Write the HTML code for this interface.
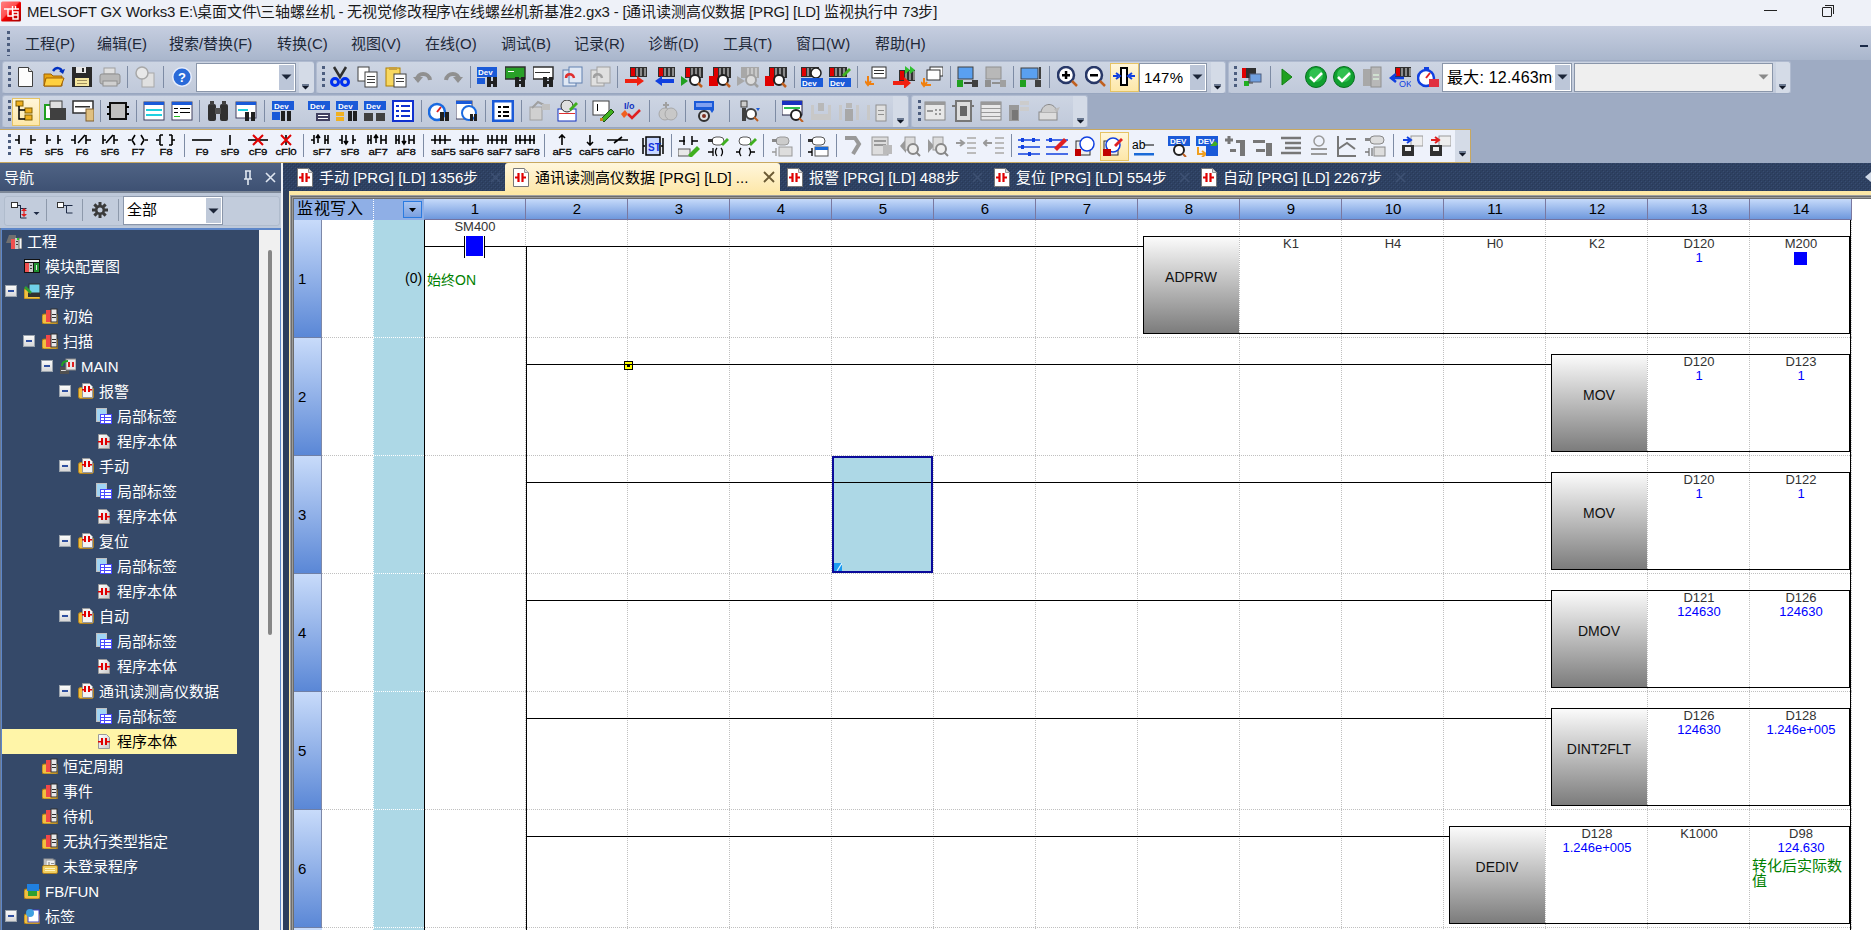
<!DOCTYPE html>
<html lang="zh-CN"><head><meta charset="utf-8"><title>GX Works3</title>
<style>
html,body{margin:0;padding:0;width:1871px;height:930px;overflow:hidden;background:#a4b1c8;font-family:"Liberation Sans", sans-serif;}
div{box-sizing:border-box;}
.ic{position:absolute;}
.sep{position:absolute;width:1px;background:#7d8ba4;}
.grip{position:absolute;width:3px;background-image:linear-gradient(#4c5d7e 3px,transparent 3px);background-size:3px 6px;}
.tr{position:absolute;color:#fff;font-size:15px;white-space:nowrap;line-height:20px;}
.exp{position:absolute;width:12px;height:12px;background:linear-gradient(#fafafa,#d8d8d8);border:1px solid #9aa3ad;}
.exp:after{content:"";position:absolute;left:2px;top:4px;width:6px;height:2px;background:#3050a0;}
.op{position:absolute;width:102px;text-align:center;font-size:13px;line-height:14px;color:#333;white-space:nowrap;}
.val{position:absolute;width:102px;text-align:center;font-size:13px;line-height:14px;color:#0000ff;white-space:nowrap;}
.vd{position:absolute;width:1px;background-image:linear-gradient(#c0c0c0 50%,transparent 50%);background-size:1px 2px;}
.hd{position:absolute;height:1px;background-image:linear-gradient(90deg,#c0c0c0 50%,transparent 50%);background-size:2px 1px;}
.blk{position:absolute;background:#000;}
</style></head><body>

<div style="position:absolute;left:0px;top:0px;width:1871px;height:26px;background:#eef1f8"></div>
<svg class="ic" style="left:1px;top:1px" width="21" height="21"><defs><linearGradient id="tg" x1="0" y1="0" x2="1" y2="1"><stop offset="0" stop-color="#ff8080"/><stop offset="0.45" stop-color="#ff5050"/><stop offset="0.5" stop-color="#f00000"/><stop offset="1" stop-color="#a00000"/></linearGradient></defs><rect x="0" y="0.5" width="20" height="20" rx="1.5" fill="url(#tg)"/><path d="M3 8h15M7 8v7h5M11.5 5v10M14.5 5v3M12 11h5v7h-5zM12 14h5" fill="none" stroke="#fff" stroke-width="1.4"/></svg>
<div style="position:absolute;left:27px;top:2px;white-space:nowrap;font-size:15px;color:#1a1a1a;line-height:20px;letter-spacing:-0.17px">MELSOFT GX Works3 E:\桌面文件\三轴螺丝机 - 无视觉修改程序\在线螺丝机新基准2.gx3 - [通讯读测高仪数据 [PRG] [LD] 监视执行中 73步]</div>
<div style="position:absolute;left:1764px;top:10px;width:13px;height:1px;background:#222"></div>
<div style="position:absolute;left:1822px;top:7px;width:10px;height:10px;border:1px solid #222;border-radius:1px"></div>
<div style="position:absolute;left:1825px;top:5px;width:9px;height:9px;border-top:1px solid #222;border-right:1px solid #222"></div>
<div style="position:absolute;left:0px;top:26px;width:1871px;height:34px;background:linear-gradient(#c6cee0,#a9b6cc)"></div>
<div class="grip" style="left:7px;top:31px;height:25px"></div>
<div style="position:absolute;left:25px;top:34px;white-space:nowrap;font-size:15px;color:#1e2838;line-height:20px">工程(P)</div>
<div style="position:absolute;left:97px;top:34px;white-space:nowrap;font-size:15px;color:#1e2838;line-height:20px">编辑(E)</div>
<div style="position:absolute;left:169px;top:34px;white-space:nowrap;font-size:15px;color:#1e2838;line-height:20px">搜索/替换(F)</div>
<div style="position:absolute;left:277px;top:34px;white-space:nowrap;font-size:15px;color:#1e2838;line-height:20px">转换(C)</div>
<div style="position:absolute;left:351px;top:34px;white-space:nowrap;font-size:15px;color:#1e2838;line-height:20px">视图(V)</div>
<div style="position:absolute;left:425px;top:34px;white-space:nowrap;font-size:15px;color:#1e2838;line-height:20px">在线(O)</div>
<div style="position:absolute;left:501px;top:34px;white-space:nowrap;font-size:15px;color:#1e2838;line-height:20px">调试(B)</div>
<div style="position:absolute;left:574px;top:34px;white-space:nowrap;font-size:15px;color:#1e2838;line-height:20px">记录(R)</div>
<div style="position:absolute;left:648px;top:34px;white-space:nowrap;font-size:15px;color:#1e2838;line-height:20px">诊断(D)</div>
<div style="position:absolute;left:723px;top:34px;white-space:nowrap;font-size:15px;color:#1e2838;line-height:20px">工具(T)</div>
<div style="position:absolute;left:796px;top:34px;white-space:nowrap;font-size:15px;color:#1e2838;line-height:20px">窗口(W)</div>
<div style="position:absolute;left:875px;top:34px;white-space:nowrap;font-size:15px;color:#1e2838;line-height:20px">帮助(H)</div>
<div style="position:absolute;left:1860px;top:45px;width:8px;height:2px;background:#1a2a48"></div>
<div style="position:absolute;left:0px;top:60px;width:1871px;height:103px;background:#9eabc3"></div>
<div style="position:absolute;left:2px;top:61px;width:312px;height:33px;background:linear-gradient(#cdd5e3,#c0c9da);border:1px solid #b0bbd0;border-bottom-color:#98a6bf;border-radius:3px"></div>
<div style="position:absolute;left:316px;top:61px;width:910px;height:33px;background:linear-gradient(#cdd5e3,#c0c9da);border:1px solid #b0bbd0;border-bottom-color:#98a6bf;border-radius:3px"></div>
<div style="position:absolute;left:1228px;top:61px;width:563px;height:33px;background:linear-gradient(#cdd5e3,#c0c9da);border:1px solid #b0bbd0;border-bottom-color:#98a6bf;border-radius:3px"></div>
<div class="grip" style="left:8px;top:66px;height:22px"></div>
<div class="grip" style="left:322px;top:66px;height:22px"></div>
<div class="grip" style="left:1234px;top:66px;height:22px"></div>
<div style="position:absolute;left:299px;top:62px;width:15px;height:31px;background:#d4dbe7;border-radius:0 3px 3px 0"></div>
<div style="position:absolute;left:1211px;top:62px;width:14px;height:31px;background:#d4dbe7;border-radius:0 3px 3px 0"></div>
<div style="position:absolute;left:1776px;top:62px;width:14px;height:31px;background:#d4dbe7;border-radius:0 3px 3px 0"></div>
<svg class="ic" style="left:15px;top:66px" width="22" height="22" viewBox="0 0 22 22"><path d="M3.5 1.5h10l4 4v15h-14z" fill="#fdfdfd" stroke="#404040" stroke-width="1"/><path d="M13.5 1.5v4h4" fill="#ddd" stroke="#404040" stroke-width="1"/></svg>
<svg class="ic" style="left:43px;top:66px" width="22" height="22" viewBox="0 0 22 22"><path d="M1 8h7l2 2h9v10H1z" fill="#e8a410" stroke="#a06000" stroke-width="1"/><path d="M3 12h18l-3 8H1z" fill="#ffd040" stroke="#a06000" stroke-width="1"/><path d="M10 5c3-4 8-4 9 1" fill="none" stroke="#0030c0" stroke-width="2.5"/><path d="M16 5l4 3 2-5z" fill="#0030c0"/></svg>
<svg class="ic" style="left:71px;top:66px" width="22" height="22" viewBox="0 0 22 22"><rect x="1" y="1" width="20" height="20" fill="#2a2a2a"/><rect x="5" y="1" width="10" height="6" fill="#e8e8e8"/><rect x="11" y="2" width="2" height="4" fill="#2a2a2a"/><rect x="4" y="12" width="14" height="8" fill="#f4e6a0"/><rect x="6" y="14" width="10" height="1" fill="#a09060"/><rect x="6" y="17" width="10" height="1" fill="#a09060"/></svg>
<svg class="ic" style="left:99px;top:66px" width="22" height="22" viewBox="0 0 22 22"><rect x="5" y="2" width="11" height="6" fill="#e0e0e0" stroke="#a0a0a0" stroke-width="1"/><rect x="1" y="8" width="20" height="10" fill="#b8b8b8" stroke="#909090" stroke-width="1" rx="2"/><rect x="4" y="15" width="14" height="5" fill="#d0d0d0" stroke="#909090" stroke-width="1"/></svg>
<div class="sep" style="left:127px;top:66px;height:22px"></div>
<svg class="ic" style="left:135px;top:66px" width="22" height="22" viewBox="0 0 22 22"><rect x="7" y="7" width="12" height="14" fill="#e0e0e0" stroke="#a8a8a8" stroke-width="1"/><circle cx="7" cy="7" r="6" fill="#e8e8e8" stroke="#a8a8a8" stroke-width="1.5"/></svg>
<div class="sep" style="left:163px;top:66px;height:22px"></div>
<svg class="ic" style="left:171px;top:66px" width="22" height="22" viewBox="0 0 22 22"><circle cx="11" cy="11" r="10" fill="#e8eefc"/><circle cx="11" cy="11" r="8.5" fill="#2a6ad8"/><text x="7" y="16" font-family="Liberation Sans" font-size="13" font-weight="bold" fill="#fff">?</text></svg>
<svg class="ic" style="left:329px;top:66px" width="22" height="22" viewBox="0 0 22 22"><path d="M5 1l6 10 6-10" fill="none" stroke="#303030" stroke-width="2.5"/><circle cx="6" cy="16" r="3.5" fill="none" stroke="#0030f0" stroke-width="3"/><circle cx="16" cy="16" r="3.5" fill="none" stroke="#0030f0" stroke-width="3"/></svg>
<svg class="ic" style="left:357px;top:66px" width="22" height="22" viewBox="0 0 22 22"><rect x="1" y="1" width="11" height="14" fill="#fff" stroke="#404040" stroke-width="1"/><rect x="8" y="6" width="12" height="15" fill="#fff" stroke="#404040" stroke-width="1"/><rect x="10" y="10" width="8" height="1" fill="#404040"/><rect x="10" y="13" width="8" height="1" fill="#404040"/><rect x="10" y="16" width="8" height="1" fill="#404040"/></svg>
<svg class="ic" style="left:385px;top:66px" width="22" height="22" viewBox="0 0 22 22"><rect x="1" y="2" width="14" height="18" fill="#f8d860" stroke="#b08000" stroke-width="1"/><rect x="4" y="1" width="8" height="3" fill="#c8a040"/><rect x="9" y="8" width="12" height="13" fill="#fff" stroke="#404040" stroke-width="1"/><rect x="11" y="12" width="8" height="1" fill="#404040"/><rect x="11" y="15" width="8" height="1" fill="#404040"/></svg>
<svg class="ic" style="left:413px;top:66px" width="22" height="22" viewBox="0 0 22 22"><path d="M4 14c0-8 12-8 13 0" fill="none" stroke="#909090" stroke-width="4"/><path d="M0 11l5 6 5-6z" fill="#909090"/></svg>
<svg class="ic" style="left:441px;top:66px" width="22" height="22" viewBox="0 0 22 22"><path d="M18 14c0-8-12-8-13 0" fill="none" stroke="#909090" stroke-width="4"/><path d="M22 11l-5 6-5-6z" fill="#909090"/></svg>
<div class="sep" style="left:470px;top:66px;height:22px"></div>
<svg class="ic" style="left:477px;top:66px" width="22" height="22" viewBox="0 0 22 22"><rect x="0" y="1" width="20" height="10" fill="#1a5ad8"/><text x="1" y="9" font-family="Liberation Sans" font-size="8" font-weight="bold" fill="#fff">Dev</text><rect x="0" y="12" width="8" height="6" fill="#1a5ad8"/><rect x="10" y="11" width="4" height="10" fill="#202020"/><rect x="16" y="11" width="4" height="10" fill="#202020"/><rect x="12" y="15" width="6" height="3" fill="#202020"/></svg>
<svg class="ic" style="left:505px;top:66px" width="22" height="22" viewBox="0 0 22 22"><rect x="0" y="1" width="20" height="12" fill="#28a028" stroke="#303030" stroke-width="1.5"/><rect x="3" y="5" width="6" height="1" fill="#fff"/><rect x="10" y="11" width="4" height="10" fill="#202020"/><rect x="16" y="11" width="4" height="10" fill="#202020"/><rect x="12" y="15" width="6" height="3" fill="#202020"/></svg>
<svg class="ic" style="left:533px;top:66px" width="22" height="22" viewBox="0 0 22 22"><rect x="0" y="1" width="20" height="12" fill="#fff" stroke="#303030" stroke-width="1.5"/><rect x="2" y="6" width="15" height="1" fill="#303030"/><rect x="10" y="11" width="4" height="10" fill="#202020"/><rect x="16" y="11" width="4" height="10" fill="#202020"/><rect x="12" y="15" width="6" height="3" fill="#202020"/></svg>
<svg class="ic" style="left:561px;top:66px" width="22" height="22" viewBox="0 0 22 22"><rect x="2" y="4" width="13" height="16" fill="#e0e8f4" stroke="#6080b0" stroke-width="1"/><rect x="8" y="1" width="13" height="16" fill="#e0e8f4" stroke="#6080b0" stroke-width="1"/><path d="M5 12c0-5 7-5 8 0" fill="none" stroke="#e03030" stroke-width="2.5"/></svg>
<svg class="ic" style="left:589px;top:66px" width="22" height="22" viewBox="0 0 22 22"><rect x="2" y="4" width="13" height="16" fill="#e0e0e0" stroke="#a0a0a0" stroke-width="1"/><rect x="8" y="1" width="13" height="16" fill="#e0e0e0" stroke="#a0a0a0" stroke-width="1"/><path d="M5 12c0-5 7-5 8 0" fill="none" stroke="#a0a0a0" stroke-width="2.5"/></svg>
<div class="sep" style="left:617px;top:66px;height:22px"></div>
<svg class="ic" style="left:625px;top:66px" width="22" height="22" viewBox="0 0 22 22"><rect x="5" y="1" width="17" height="10" fill="#303030"/><rect x="6" y="2" width="4" height="8" fill="#e00000"/><rect x="11" y="2" width="2" height="8" fill="#8a8a8a"/><rect x="15" y="2" width="2" height="8" fill="#8a8a8a"/><rect x="19" y="2" width="2" height="8" fill="#8a8a8a"/><rect x="0" y="13" width="13" height="4" fill="#f02010"/><path d="M12 10l7 5-7 5z" fill="#f02010"/></svg>
<svg class="ic" style="left:653px;top:66px" width="22" height="22" viewBox="0 0 22 22"><rect x="5" y="1" width="17" height="10" fill="#303030"/><rect x="6" y="2" width="4" height="8" fill="#e00000"/><rect x="11" y="2" width="2" height="8" fill="#8a8a8a"/><rect x="15" y="2" width="2" height="8" fill="#8a8a8a"/><rect x="19" y="2" width="2" height="8" fill="#8a8a8a"/><rect x="8" y="13" width="13" height="4" fill="#1040e0"/><path d="M9 10l-7 5 7 5z" fill="#1040e0"/></svg>
<svg class="ic" style="left:681px;top:66px" width="22" height="22" viewBox="0 0 22 22"><rect x="4" y="1" width="18" height="11" fill="#303030"/><rect x="5" y="2" width="4" height="9" fill="#e00000"/><rect x="10" y="2" width="2" height="9" fill="#8a8a8a"/><rect x="14" y="2" width="2" height="9" fill="#8a8a8a"/><rect x="18" y="2" width="2" height="9" fill="#8a8a8a"/><path d="M0 10l7 5-7 5z" fill="#20a020"/><circle cx="14" cy="14" r="5" fill="#fff" stroke="#202020" stroke-width="2"/><path d="M17 17l4 4" fill="none" stroke="#c06020" stroke-width="2.5"/></svg>
<svg class="ic" style="left:709px;top:66px" width="22" height="22" viewBox="0 0 22 22"><rect x="4" y="1" width="18" height="11" fill="#303030"/><rect x="5" y="2" width="4" height="9" fill="#e00000"/><rect x="10" y="2" width="2" height="9" fill="#8a8a8a"/><rect x="14" y="2" width="2" height="9" fill="#8a8a8a"/><rect x="18" y="2" width="2" height="9" fill="#8a8a8a"/><rect x="0" y="10" width="9" height="10" fill="#e00000"/><circle cx="14" cy="14" r="5" fill="#fff" stroke="#202020" stroke-width="2"/><path d="M17 17l4 4" fill="none" stroke="#c06020" stroke-width="2.5"/></svg>
<svg class="ic" style="left:737px;top:66px" width="22" height="22" viewBox="0 0 22 22"><rect x="4" y="1" width="18" height="11" fill="#a8a8a8"/><rect x="10" y="2" width="2" height="9" fill="#c8c8c8"/><rect x="14" y="2" width="2" height="9" fill="#c8c8c8"/><rect x="18" y="2" width="2" height="9" fill="#c8c8c8"/><path d="M0 10l8 5-8 5z" fill="#a8a8a8"/><circle cx="14" cy="14" r="5" fill="#ddd" stroke="#a0a0a0" stroke-width="2"/><path d="M17 17l4 4" fill="none" stroke="#a0a0a0" stroke-width="2.5"/></svg>
<svg class="ic" style="left:765px;top:66px" width="22" height="22" viewBox="0 0 22 22"><rect x="4" y="1" width="18" height="11" fill="#303030"/><rect x="5" y="2" width="4" height="9" fill="#e00000"/><rect x="10" y="2" width="2" height="9" fill="#8a8a8a"/><rect x="14" y="2" width="2" height="9" fill="#8a8a8a"/><rect x="18" y="2" width="2" height="9" fill="#8a8a8a"/><rect x="0" y="10" width="9" height="10" fill="#e00000"/><circle cx="14" cy="14" r="5" fill="#fff" stroke="#202020" stroke-width="2"/><path d="M17 17l4 4" fill="none" stroke="#c06020" stroke-width="2.5"/></svg>
<div class="sep" style="left:794px;top:66px;height:22px"></div>
<svg class="ic" style="left:801px;top:66px" width="22" height="22" viewBox="0 0 22 22"><rect x="0" y="1" width="18" height="10" fill="#303030"/><rect x="1" y="2" width="4" height="8" fill="#e00000"/><rect x="6" y="2" width="2" height="8" fill="#8a8a8a"/><rect x="10" y="2" width="2" height="8" fill="#8a8a8a"/><rect x="14" y="2" width="2" height="8" fill="#8a8a8a"/><circle cx="15" cy="7" r="5" fill="#fff" stroke="#202020" stroke-width="1.5"/><rect x="0" y="12" width="22" height="9" fill="#1a5ad8"/><text x="1" y="20" font-family="Liberation Sans" font-size="8" font-weight="bold" fill="#fff">Dev</text></svg>
<svg class="ic" style="left:829px;top:66px" width="22" height="22" viewBox="0 0 22 22"><rect x="0" y="1" width="18" height="10" fill="#303030"/><rect x="1" y="2" width="4" height="8" fill="#e00000"/><rect x="6" y="2" width="2" height="8" fill="#8a8a8a"/><rect x="10" y="2" width="2" height="8" fill="#8a8a8a"/><rect x="14" y="2" width="2" height="8" fill="#8a8a8a"/><path d="M13 9l7-7 2 2-7 7z" fill="#40b020"/><rect x="0" y="12" width="22" height="9" fill="#1a5ad8"/><text x="1" y="20" font-family="Liberation Sans" font-size="8" font-weight="bold" fill="#fff">Dev</text></svg>
<div class="sep" style="left:857px;top:66px;height:22px"></div>
<svg class="ic" style="left:865px;top:66px" width="22" height="22" viewBox="0 0 22 22"><rect x="7" y="1" width="14" height="11" fill="#fff" stroke="#303030" stroke-width="1"/><rect x="9" y="4" width="10" height="1" fill="#303030"/><rect x="9" y="7" width="10" height="1" fill="#303030"/><path d="M3 10v8M0 15l3 4 3-4M3 18h6" fill="none" stroke="#f08010" stroke-width="2"/></svg>
<svg class="ic" style="left:893px;top:66px" width="22" height="22" viewBox="0 0 22 22"><rect x="6" y="4" width="16" height="11" fill="#303030"/><rect x="7" y="5" width="4" height="9" fill="#e00000"/><rect x="12" y="5" width="2" height="9" fill="#8a8a8a"/><rect x="16" y="5" width="2" height="9" fill="#8a8a8a"/><rect x="20" y="5" width="2" height="9" fill="#8a8a8a"/><path d="M12 0l5 4-5 4zM17 0l5 4-5 4z" fill="#30c030"/><rect x="0" y="15" width="12" height="4" fill="#f02010"/><path d="M11 11l7 6-7 6z" fill="#f02010"/></svg>
<svg class="ic" style="left:921px;top:66px" width="22" height="22" viewBox="0 0 22 22"><rect x="9" y="1" width="13" height="9" fill="#fff" stroke="#303030" stroke-width="1"/><rect x="6" y="4" width="13" height="10" fill="#fff" stroke="#303030" stroke-width="1"/><path d="M3 12v7M0 16l3 4 3-4M3 19h7" fill="none" stroke="#f08010" stroke-width="2"/></svg>
<div class="sep" style="left:950px;top:66px;height:22px"></div>
<svg class="ic" style="left:957px;top:66px" width="22" height="22" viewBox="0 0 22 22"><rect x="1" y="1" width="15" height="12" fill="#5aa0f0" stroke="#404040" stroke-width="1"/><rect x="0" y="14" width="6" height="7" fill="#20a020"/><rect x="15" y="14" width="6" height="7" fill="#404040"/><rect x="7" y="16" width="8" height="2" fill="#404040"/></svg>
<svg class="ic" style="left:985px;top:66px" width="22" height="22" viewBox="0 0 22 22"><rect x="1" y="1" width="15" height="12" fill="#b8b8b8" stroke="#909090" stroke-width="1"/><rect x="0" y="14" width="6" height="7" fill="#909090"/><rect x="15" y="14" width="6" height="7" fill="#a0a0a0"/><rect x="7" y="16" width="8" height="2" fill="#909090"/></svg>
<div class="sep" style="left:1013px;top:66px;height:22px"></div>
<svg class="ic" style="left:1020px;top:66px" width="22" height="22" viewBox="0 0 22 22"><rect x="1" y="2" width="17" height="11" fill="#5aa0f0" stroke="#404040" stroke-width="1"/><rect x="19" y="1" width="2" height="12" fill="#404040"/><rect x="0" y="14" width="6" height="7" fill="#20a020"/><rect x="15" y="14" width="6" height="7" fill="#404040"/></svg>
<div class="sep" style="left:1049px;top:66px;height:22px"></div>
<svg class="ic" style="left:1057px;top:66px" width="22" height="22" viewBox="0 0 22 22"><circle cx="9" cy="9" r="8" fill="#fff" stroke="#283868" stroke-width="2.5"/><rect x="5" y="8" width="8" height="2.5" fill="#000"/><rect x="7.8" y="5" width="2.5" height="8" fill="#000"/><path d="M15 15l5 5" fill="none" stroke="#c06020" stroke-width="2.5"/></svg>
<svg class="ic" style="left:1085px;top:66px" width="22" height="22" viewBox="0 0 22 22"><circle cx="9" cy="9" r="8" fill="#fff" stroke="#283868" stroke-width="2.5"/><rect x="5" y="8" width="8" height="2.5" fill="#000"/><path d="M15 15l5 5" fill="none" stroke="#c06020" stroke-width="2.5"/></svg>
<svg class="ic" style="left:1241px;top:66px" width="22" height="22" viewBox="0 0 22 22"><rect x="1" y="2" width="14" height="10" fill="#303030"/><rect x="1" y="2" width="4" height="10" fill="#e00000"/><rect x="9" y="8" width="11" height="8" fill="#70a0e0" stroke="#506080" stroke-width="1"/><rect x="3" y="15" width="5" height="5" fill="#20b020"/><path d="M8 12v5h4" fill="none" stroke="#404040" stroke-width="1"/></svg>
<div class="sep" style="left:1270px;top:66px;height:22px"></div>
<svg class="ic" style="left:1276px;top:66px" width="22" height="22" viewBox="0 0 22 22"><path d="M6 3l10 8-10 8z" fill="#20a020" stroke="#108010" stroke-width="1"/></svg>
<svg class="ic" style="left:1305px;top:66px" width="22" height="22" viewBox="0 0 22 22"><circle cx="11" cy="11" r="10.5" fill="#10a030" stroke="#087020" stroke-width="1"/><circle cx="11" cy="9" r="7" fill="#30c050"/><path d="M5 11l4 4 8-8" fill="none" stroke="#fff" stroke-width="2.5"/></svg>
<svg class="ic" style="left:1333px;top:66px" width="22" height="22" viewBox="0 0 22 22"><circle cx="11" cy="11" r="10.5" fill="#10a030" stroke="#087020" stroke-width="1"/><circle cx="11" cy="9" r="7" fill="#30c050"/><path d="M5 11l4 4 8-8" fill="none" stroke="#fff" stroke-width="2.5"/></svg>
<svg class="ic" style="left:1361px;top:66px" width="22" height="22" viewBox="0 0 22 22"><rect x="2" y="3" width="8" height="17" fill="#a8a8a8"/><rect x="10" y="1" width="10" height="20" fill="#b8b8b8" stroke="#909090" stroke-width="1"/><rect x="12" y="8" width="6" height="2" fill="#d0e0d0"/><rect x="12" y="12" width="6" height="2" fill="#d0e0d0"/></svg>
<svg class="ic" style="left:1389px;top:66px" width="22" height="22" viewBox="0 0 22 22"><rect x="6" y="1" width="16" height="10" fill="#303030"/><rect x="7" y="2" width="4" height="8" fill="#e00000"/><rect x="12" y="2" width="2" height="8" fill="#8a8a8a"/><rect x="16" y="2" width="2" height="8" fill="#8a8a8a"/><rect x="20" y="2" width="2" height="8" fill="#8a8a8a"/><path d="M3 12h12M7 8l-5 4 5 4" fill="none" stroke="#1040e0" stroke-width="2.5"/><text x="10" y="21" font-family="Liberation Sans" font-size="9" font-weight="normal" fill="#1040e0">OK</text></svg>
<svg class="ic" style="left:1417px;top:66px" width="22" height="22" viewBox="0 0 22 22"><circle cx="9" cy="12" r="8" fill="#fff" stroke="#1040e0" stroke-width="2.5"/><rect x="7" y="1" width="5" height="3" fill="#1040e0"/><path d="M9 12l4-5" fill="none" stroke="#e02020" stroke-width="2"/><rect x="12" y="13" width="10" height="8" fill="#e03040"/></svg>
<div style="position:absolute;left:1110px;top:63px;width:29px;height:29px;background:linear-gradient(#fff6da,#fde7a8);border:1px solid #e5c365"></div>
<svg class="ic" style="left:1113px;top:66px" width="22" height="22" viewBox="0 0 22 22"><rect x="8" y="2" width="6" height="17" fill="#fff" stroke="#000" stroke-width="2"/><path d="M0 10h5M3 7l4 3-4 3" fill="none" stroke="#1040e0" stroke-width="2"/><path d="M22 10h-5M19 7l-4 3 4 3" fill="none" stroke="#1040e0" stroke-width="2"/></svg>
<svg class="ic" style="left:295px;top:68px" width="22" height="22" viewBox="0 0 22 22"><rect x="7" y="16" width="7" height="2" fill="#6a7890"/><path d="M7 18h7l-3.5 3.5z" fill="#101828"/></svg>
<svg class="ic" style="left:1207px;top:68px" width="22" height="22" viewBox="0 0 22 22"><rect x="7" y="16" width="7" height="2" fill="#6a7890"/><path d="M7 18h7l-3.5 3.5z" fill="#101828"/></svg>
<svg class="ic" style="left:1772px;top:68px" width="22" height="22" viewBox="0 0 22 22"><rect x="7" y="16" width="7" height="2" fill="#6a7890"/><path d="M7 18h7l-3.5 3.5z" fill="#101828"/></svg>
<div style="position:absolute;left:196px;top:63px;width:100px;height:29px;background:#fff;border:1px solid #8a96aa"></div>
<div style="position:absolute;left:279px;top:65px;width:15px;height:25px;background:#bcc6d8"></div>
<svg class="ic" style="left:281px;top:74px" width="11" height="6"><path d="M0.5 0.5h10l-5 5z" fill="#1b2538"/></svg>
<div style="position:absolute;left:1139px;top:63px;width:68px;height:29px;background:#fff;border:1px solid #8a96aa"></div>
<div style="position:absolute;left:1144px;top:68px;white-space:nowrap;font-size:15px;color:#000;line-height:20px;overflow:hidden;width:44px;letter-spacing:0.2px">147%</div>
<div style="position:absolute;left:1190px;top:65px;width:15px;height:25px;background:#bcc6d8"></div>
<svg class="ic" style="left:1192px;top:74px" width="11" height="6"><path d="M0.5 0.5h10l-5 5z" fill="#1b2538"/></svg>
<div style="position:absolute;left:1442px;top:63px;width:130px;height:29px;background:#fff;border:1px solid #8a96aa"></div>
<div style="position:absolute;left:1447px;top:68px;white-space:nowrap;font-size:16px;color:#000;line-height:20px;overflow:hidden;width:106px;letter-spacing:0.2px">最大: 12.463ms</div>
<div style="position:absolute;left:1555px;top:65px;width:15px;height:25px;background:#bcc6d8"></div>
<svg class="ic" style="left:1557px;top:74px" width="11" height="6"><path d="M0.5 0.5h10l-5 5z" fill="#1b2538"/></svg>
<div style="position:absolute;left:1574px;top:63px;width:199px;height:29px;background:#efefef;border:1px solid #8a96aa"></div>
<div style="position:absolute;left:1756px;top:65px;width:15px;height:25px;background:#efefef"></div>
<svg class="ic" style="left:1758px;top:74px" width="11" height="6"><path d="M0.5 0.5h10l-5 5z" fill="#8a8a8a"/></svg>
<div style="position:absolute;left:2px;top:95px;width:907px;height:33px;background:linear-gradient(#cdd5e3,#c0c9da);border:1px solid #b0bbd0;border-bottom-color:#98a6bf;border-radius:3px"></div>
<div style="position:absolute;left:911px;top:95px;width:177px;height:33px;background:linear-gradient(#cdd5e3,#c0c9da);border:1px solid #b0bbd0;border-bottom-color:#98a6bf;border-radius:3px"></div>
<div style="position:absolute;left:893px;top:96px;width:15px;height:31px;background:#d4dbe7;border-radius:0 3px 3px 0"></div>
<div style="position:absolute;left:1073px;top:96px;width:14px;height:31px;background:#d4dbe7;border-radius:0 3px 3px 0"></div>
<div class="grip" style="left:8px;top:100px;height:22px"></div>
<div class="grip" style="left:918px;top:100px;height:22px"></div>
<div style="position:absolute;left:12px;top:98px;width:28px;height:28px;background:linear-gradient(#fff6da,#fde7a8);border:1px solid #e5c365"></div>
<svg class="ic" style="left:15px;top:100px" width="22" height="22" viewBox="0 0 22 22"><rect x="1" y="1" width="7" height="5" fill="#f0b020" stroke="#806000" stroke-width="1"/><rect x="10" y="8" width="7" height="5" fill="#f0b020" stroke="#806000" stroke-width="1"/><rect x="10" y="15" width="7" height="5" fill="#f0b020" stroke="#806000" stroke-width="1"/><path d="M4 6v13h6M4 10h6" fill="none" stroke="#000" stroke-width="1.5"/></svg>
<svg class="ic" style="left:44px;top:100px" width="22" height="22" viewBox="0 0 22 22"><rect x="1" y="5" width="12" height="14" fill="#fff" stroke="#20a020" stroke-width="2"/><rect x="6" y="1" width="12" height="8" fill="#e0e0e0" stroke="#404040" stroke-width="1"/><rect x="6" y="8" width="16" height="12" fill="#404040"/></svg>
<svg class="ic" style="left:72px;top:100px" width="22" height="22" viewBox="0 0 22 22"><rect x="1" y="1" width="20" height="12" fill="#fff" stroke="#303030" stroke-width="1.5"/><rect x="3" y="6" width="15" height="1.5" fill="#303030"/><rect x="14" y="9" width="8" height="12" fill="#e0c080" stroke="#806030" stroke-width="1"/></svg>
<div class="sep" style="left:100px;top:100px;height:22px"></div>
<svg class="ic" style="left:107px;top:100px" width="22" height="22" viewBox="0 0 22 22"><rect x="3" y="3" width="16" height="16" fill="#c0c0c0" stroke="#101010" stroke-width="2"/><rect x="0" y="6" width="3" height="2" fill="#000"/><rect x="0" y="13" width="3" height="2" fill="#000"/><rect x="19" y="6" width="3" height="2" fill="#000"/><rect x="19" y="13" width="3" height="2" fill="#000"/></svg>
<div class="sep" style="left:136px;top:100px;height:22px"></div>
<svg class="ic" style="left:143px;top:100px" width="22" height="22" viewBox="0 0 22 22"><rect x="1" y="2" width="20" height="18" fill="#fff" stroke="#404060" stroke-width="1"/><rect x="1" y="2" width="20" height="3" fill="#1a5ad8"/><rect x="3" y="9" width="16" height="2" fill="#20d0e0"/><rect x="3" y="14" width="16" height="2" fill="#20d0e0"/></svg>
<svg class="ic" style="left:171px;top:100px" width="22" height="22" viewBox="0 0 22 22"><rect x="1" y="2" width="20" height="18" fill="#fff" stroke="#404060" stroke-width="1"/><rect x="1" y="2" width="20" height="3" fill="#1a5ad8"/><rect x="3" y="8" width="4" height="1" fill="#000"/><rect x="9" y="8" width="10" height="1" fill="#000"/><rect x="3" y="12" width="4" height="1" fill="#000"/><rect x="9" y="12" width="10" height="1" fill="#000"/><rect x="3" y="16" width="6" height="1" fill="#20c020"/></svg>
<div class="sep" style="left:199px;top:100px;height:22px"></div>
<svg class="ic" style="left:207px;top:100px" width="22" height="22" viewBox="0 0 22 22"><rect x="1" y="4" width="8" height="17" fill="#303030" rx="2"/><rect x="13" y="4" width="8" height="17" fill="#303030" rx="2"/><rect x="8" y="8" width="6" height="6" fill="#505050"/><rect x="3" y="1" width="4" height="4" fill="#404040"/><rect x="15" y="1" width="4" height="4" fill="#404040"/></svg>
<svg class="ic" style="left:235px;top:100px" width="22" height="22" viewBox="0 0 22 22"><rect x="1" y="2" width="20" height="16" fill="#fff" stroke="#404060" stroke-width="1"/><rect x="1" y="2" width="20" height="3" fill="#1a5ad8"/><rect x="3" y="9" width="10" height="2" fill="#20d0e0"/><rect x="10" y="12" width="4" height="9" fill="#202020"/><rect x="16" y="12" width="4" height="9" fill="#202020"/></svg>
<div class="sep" style="left:264px;top:100px;height:22px"></div>
<svg class="ic" style="left:272px;top:100px" width="22" height="22" viewBox="0 0 22 22"><rect x="0" y="1" width="22" height="9" fill="#1a5ad8"/><text x="2" y="9" font-family="Liberation Sans" font-size="8" font-weight="bold" fill="#fff">Dev</text><rect x="0" y="12" width="8" height="8" fill="#1a5ad8"/><rect x="9" y="11" width="4" height="10" fill="#202020"/><rect x="15" y="11" width="4" height="10" fill="#202020"/></svg>
<svg class="ic" style="left:308px;top:100px" width="22" height="22" viewBox="0 0 22 22"><rect x="0" y="1" width="22" height="9" fill="#1a5ad8"/><text x="2" y="9" font-family="Liberation Sans" font-size="8" font-weight="bold" fill="#fff">Dev</text><rect x="8" y="13" width="14" height="8" fill="#404060"/><rect x="10" y="15" width="10" height="1" fill="#fff"/><rect x="10" y="18" width="10" height="1" fill="#fff"/></svg>
<svg class="ic" style="left:336px;top:100px" width="22" height="22" viewBox="0 0 22 22"><rect x="0" y="1" width="22" height="9" fill="#1a5ad8"/><text x="2" y="9" font-family="Liberation Sans" font-size="8" font-weight="bold" fill="#fff">Dev</text><rect x="0" y="12" width="8" height="4" fill="#f0b020"/><rect x="0" y="17" width="8" height="4" fill="#f0b020"/><rect x="12" y="11" width="4" height="10" fill="#202020"/><rect x="17" y="11" width="4" height="10" fill="#202020"/></svg>
<svg class="ic" style="left:364px;top:100px" width="22" height="22" viewBox="0 0 22 22"><rect x="0" y="1" width="22" height="9" fill="#1a5ad8"/><text x="2" y="9" font-family="Liberation Sans" font-size="8" font-weight="bold" fill="#fff">Dev</text><rect x="0" y="13" width="9" height="8" fill="#404040"/><rect x="12" y="13" width="9" height="8" fill="#404040"/></svg>
<svg class="ic" style="left:392px;top:100px" width="22" height="22" viewBox="0 0 22 22"><rect x="1" y="1" width="20" height="20" fill="#fff" stroke="#1030d0" stroke-width="2"/><rect x="4" y="5" width="3" height="2" fill="#1030d0"/><rect x="9" y="5" width="9" height="2" fill="#1030d0"/><rect x="4" y="10" width="3" height="2" fill="#1030d0"/><rect x="9" y="10" width="9" height="2" fill="#1030d0"/><rect x="4" y="15" width="3" height="2" fill="#1030d0"/><rect x="9" y="15" width="9" height="2" fill="#1030d0"/></svg>
<div class="sep" style="left:421px;top:100px;height:22px"></div>
<svg class="ic" style="left:428px;top:100px" width="22" height="22" viewBox="0 0 22 22"><circle cx="9" cy="12" r="8" fill="#fff" stroke="#1a6ae0" stroke-width="2.5"/><path d="M9 12l4-5" fill="none" stroke="#e02020" stroke-width="2"/><rect x="12" y="12" width="4" height="9" fill="#202020"/><rect x="17" y="12" width="4" height="9" fill="#202020"/></svg>
<svg class="ic" style="left:456px;top:100px" width="22" height="22" viewBox="0 0 22 22"><rect x="0" y="1" width="16" height="18" fill="#fff" stroke="#404060" stroke-width="1"/><rect x="0" y="1" width="16" height="3" fill="#1a5ad8"/><circle cx="13" cy="13" r="7" fill="#fff" stroke="#1a6ae0" stroke-width="2"/><rect x="14" y="14" width="3" height="7" fill="#202020"/><rect x="18" y="14" width="3" height="7" fill="#202020"/></svg>
<div class="sep" style="left:485px;top:100px;height:22px"></div>
<svg class="ic" style="left:492px;top:100px" width="22" height="22" viewBox="0 0 22 22"><rect x="1" y="1" width="20" height="20" fill="#fff" stroke="#1a5ad8" stroke-width="3"/><rect x="6" y="6" width="3" height="2" fill="#000"/><rect x="11" y="6" width="6" height="2" fill="#000"/><rect x="6" y="11" width="3" height="2" fill="#000"/><rect x="11" y="11" width="6" height="2" fill="#000"/><rect x="6" y="15" width="3" height="2" fill="#000"/><rect x="11" y="15" width="6" height="2" fill="#000"/></svg>
<div class="sep" style="left:521px;top:100px;height:22px"></div>
<svg class="ic" style="left:528px;top:100px" width="22" height="22" viewBox="0 0 22 22"><rect x="2" y="7" width="12" height="13" fill="#d0d0d0" stroke="#a0a0a0" stroke-width="1"/><path d="M4 8l6-6 8 4" fill="none" stroke="#a0a0a0" stroke-width="2"/><rect x="14" y="4" width="8" height="6" fill="#c0c0c0"/></svg>
<svg class="ic" style="left:556px;top:100px" width="22" height="22" viewBox="0 0 22 22"><rect x="2" y="9" width="18" height="12" fill="#fff" stroke="#1030c0" stroke-width="1"/><rect x="3" y="13" width="16" height="1" fill="#e03030"/><circle cx="11" cy="6" r="6" fill="#e0e0e0" stroke="#303030" stroke-width="1"/><path d="M13 9l7-7 2 2-7 7z" fill="#40b020"/></svg>
<div class="sep" style="left:585px;top:100px;height:22px"></div>
<svg class="ic" style="left:592px;top:100px" width="22" height="22" viewBox="0 0 22 22"><rect x="1" y="1" width="16" height="14" fill="#fff" stroke="#404040" stroke-width="1"/><rect x="5" y="4" width="1" height="7" fill="#000"/><path d="M9 19l10-10 3 3-10 10z" fill="#40b020" stroke="#205010" stroke-width="1"/><rect x="8" y="18" width="3" height="3" fill="#c08020"/></svg>
<svg class="ic" style="left:620px;top:100px" width="22" height="22" viewBox="0 0 22 22"><text x="4" y="9" font-family="Liberation Sans" font-size="9" font-weight="bold" fill="#1030c0">I/o</text><path d="M1 14l4-4 3 4-4 4z" fill="#f06020"/><path d="M8 14l4 4 8-8" fill="none" stroke="#e02020" stroke-width="2.5"/></svg>
<div class="sep" style="left:649px;top:100px;height:22px"></div>
<svg class="ic" style="left:656px;top:100px" width="22" height="22" viewBox="0 0 22 22"><circle cx="9" cy="14" r="6" fill="#c8c8c8" stroke="#a8a8a8" stroke-width="1"/><circle cx="15" cy="14" r="6" fill="#c8c8c8" stroke="#a8a8a8" stroke-width="1"/><path d="M10 2v6M7 5h6" fill="none" stroke="#a0a0a0" stroke-width="2"/></svg>
<div class="sep" style="left:685px;top:100px;height:22px"></div>
<svg class="ic" style="left:694px;top:100px" width="22" height="22" viewBox="0 0 22 22"><rect x="0" y="1" width="20" height="9" fill="#1a5ad8"/><rect x="2" y="3" width="16" height="4" fill="#80a0f0"/><path d="M20 10l-4 0 2 3z" fill="#1a5ad8"/><circle cx="10" cy="16" r="5" fill="#e0e0e0" stroke="#303030" stroke-width="2"/><circle cx="10" cy="16" r="2" fill="#803020"/></svg>
<div class="sep" style="left:729px;top:100px;height:22px"></div>
<svg class="ic" style="left:738px;top:100px" width="22" height="22" viewBox="0 0 22 22"><rect x="3" y="1" width="6" height="6" fill="#ccc" stroke="#404040" stroke-width="1"/><rect x="4" y="8" width="4" height="13" fill="#404040"/><circle cx="13" cy="14" r="5" fill="#fff" stroke="#404040" stroke-width="2"/><path d="M16 17l4 4" fill="none" stroke="#c06020" stroke-width="2"/><path d="M22 8l-4 0 2 3z" fill="#1a5ad8"/></svg>
<div class="sep" style="left:775px;top:100px;height:22px"></div>
<svg class="ic" style="left:782px;top:100px" width="22" height="22" viewBox="0 0 22 22"><rect x="0" y="1" width="20" height="14" fill="#fff" stroke="#202040" stroke-width="1"/><rect x="0" y="1" width="20" height="4" fill="#1a30c0"/><rect x="2" y="7" width="16" height="2" fill="#30c050"/><circle cx="14" cy="15" r="5" fill="#fff" stroke="#202020" stroke-width="2"/><path d="M17 18l4 4" fill="none" stroke="#c06020" stroke-width="2"/></svg>
<svg class="ic" style="left:810px;top:100px" width="22" height="22" viewBox="0 0 22 22"><rect x="1" y="14" width="20" height="6" fill="#c8c8c8"/><rect x="8" y="3" width="6" height="8" fill="#b8b8b8"/><rect x="1" y="5" width="3" height="15" fill="#c8c8c8"/><rect x="18" y="5" width="3" height="15" fill="#c8c8c8"/></svg>
<svg class="ic" style="left:838px;top:100px" width="22" height="22" viewBox="0 0 22 22"><rect x="1" y="5" width="3" height="15" fill="#c8c8c8"/><rect x="18" y="5" width="3" height="15" fill="#c8c8c8"/><rect x="7" y="9" width="8" height="12" fill="#a8a8a8"/><rect x="8" y="3" width="6" height="5" fill="#b8b8b8"/></svg>
<svg class="ic" style="left:866px;top:100px" width="22" height="22" viewBox="0 0 22 22"><rect x="1" y="5" width="3" height="15" fill="#c8c8c8"/><rect x="10" y="5" width="10" height="16" fill="#e0e0e0" stroke="#909090" stroke-width="1"/><rect x="12" y="10" width="6" height="1" fill="#909090"/><rect x="12" y="14" width="6" height="1" fill="#909090"/></svg>
<svg class="ic" style="left:924px;top:100px" width="22" height="22" viewBox="0 0 22 22"><rect x="1" y="2" width="20" height="18" fill="#e8e8e8" stroke="#888" stroke-width="1"/><rect x="1" y="2" width="20" height="3" fill="#999"/><rect x="3" y="10" width="6" height="2" fill="#999"/><rect x="11" y="9" width="2" height="2" fill="#999"/><rect x="15" y="9" width="2" height="2" fill="#999"/><rect x="11" y="13" width="2" height="2" fill="#999"/><rect x="15" y="13" width="2" height="2" fill="#999"/></svg>
<svg class="ic" style="left:952px;top:100px" width="22" height="22" viewBox="0 0 22 22"><rect x="4" y="1" width="15" height="20" fill="#ddd" stroke="#777" stroke-width="2"/><rect x="8" y="6" width="7" height="10" fill="#666"/><rect x="0" y="5" width="3" height="2" fill="#777"/><rect x="19" y="5" width="3" height="2" fill="#777"/></svg>
<svg class="ic" style="left:980px;top:100px" width="22" height="22" viewBox="0 0 22 22"><rect x="1" y="2" width="20" height="18" fill="#e8e8e8" stroke="#888" stroke-width="1"/><rect x="1" y="2" width="20" height="3" fill="#999"/><rect x="1" y="8" width="20" height="1" fill="#999"/><rect x="1" y="12" width="20" height="1" fill="#999"/><rect x="1" y="16" width="20" height="1" fill="#999"/></svg>
<svg class="ic" style="left:1008px;top:100px" width="22" height="22" viewBox="0 0 22 22"><rect x="1" y="5" width="10" height="16" fill="#999"/><rect x="12" y="1" width="9" height="4" fill="#ccc"/><rect x="12" y="7" width="9" height="4" fill="#ccc"/><rect x="4" y="10" width="6" height="10" fill="#777"/></svg>
<svg class="ic" style="left:1038px;top:100px" width="22" height="22" viewBox="0 0 22 22"><rect x="1" y="12" width="18" height="8" fill="#ddd" stroke="#888" stroke-width="1"/><path d="M3 12c2-10 14-10 16 0" fill="#ccc" stroke="#888" stroke-width="1"/><path d="M16 9l6-2-3 6" fill="#bbb"/></svg>
<svg class="ic" style="left:890px;top:102px" width="22" height="22" viewBox="0 0 22 22"><rect x="7" y="16" width="7" height="2" fill="#6a7890"/><path d="M7 18h7l-3.5 3.5z" fill="#101828"/></svg>
<svg class="ic" style="left:1070px;top:102px" width="22" height="22" viewBox="0 0 22 22"><rect x="7" y="16" width="7" height="2" fill="#6a7890"/><path d="M7 18h7l-3.5 3.5z" fill="#101828"/></svg>
<div style="position:absolute;left:0px;top:129px;width:1471px;height:34px;background:#eef2fb;border-top:1px solid #c8a860;border-bottom:1px solid #c8a860;border-right:1px solid #c8a860"></div>
<div style="position:absolute;left:1455px;top:130px;width:15px;height:32px;background:#d4dbe7"></div>
<svg class="ic" style="left:1452px;top:135px" width="22" height="22" viewBox="0 0 22 22"><rect x="7" y="16" width="7" height="2" fill="#6a7890"/><path d="M7 18h7l-3.5 3.5z" fill="#101828"/></svg>
<div class="grip" style="left:8px;top:134px;height:22px"></div>
<div style="position:absolute;left:15px;top:146px;white-space:nowrap;font-size:11.5px;color:#000;line-height:11px;width:22px;text-align:center;letter-spacing:-0.2px;transform:scaleY(0.85);transform-origin:50% 100%;-webkit-text-stroke:0.3px #000">F5</div>
<svg class="ic" style="left:15px;top:134px" width="22" height="12"><path d="M0 6h4M4 1v9M16 1v9M16 6h5" stroke="#000" stroke-width="1.6" fill="none"/></svg>
<div style="position:absolute;left:43px;top:146px;white-space:nowrap;font-size:11.5px;color:#000;line-height:11px;width:22px;text-align:center;letter-spacing:-0.2px;transform:scaleY(0.85);transform-origin:50% 100%;-webkit-text-stroke:0.3px #000">sF5</div>
<svg class="ic" style="left:43px;top:134px" width="22" height="12"><path d="M4 1v9M4 6h4M15 1v9M15 6h3" stroke="#000" stroke-width="1.6" fill="none"/></svg>
<div style="position:absolute;left:71px;top:146px;white-space:nowrap;font-size:11.5px;color:#000;line-height:11px;width:22px;text-align:center;letter-spacing:-0.2px;transform:scaleY(0.85);transform-origin:50% 100%;-webkit-text-stroke:0.3px #000">F6</div>
<svg class="ic" style="left:71px;top:134px" width="22" height="12"><path d="M0 6h4M4 1v9M7 9l7-8M15 1v9M15 6h5" stroke="#000" stroke-width="1.6" fill="none"/></svg>
<div style="position:absolute;left:99px;top:146px;white-space:nowrap;font-size:11.5px;color:#000;line-height:11px;width:22px;text-align:center;letter-spacing:-0.2px;transform:scaleY(0.85);transform-origin:50% 100%;-webkit-text-stroke:0.3px #000">sF6</div>
<svg class="ic" style="left:99px;top:134px" width="22" height="12"><path d="M4 1v9M4 6h3M7 9l7-8M15 1v9M15 6h4" stroke="#000" stroke-width="1.6" fill="none"/></svg>
<div style="position:absolute;left:127px;top:146px;white-space:nowrap;font-size:11.5px;color:#000;line-height:11px;width:22px;text-align:center;letter-spacing:-0.2px;transform:scaleY(0.85);transform-origin:50% 100%;-webkit-text-stroke:0.3px #000">F7</div>
<svg class="ic" style="left:127px;top:134px" width="22" height="12"><path d="M1 6h3M8 1l-3 5 3 5M14 1l3 5-3 5M18 6h3" stroke="#000" stroke-width="1.6" fill="none"/></svg>
<div style="position:absolute;left:155px;top:146px;white-space:nowrap;font-size:11.5px;color:#000;line-height:11px;width:22px;text-align:center;letter-spacing:-0.2px;transform:scaleY(0.85);transform-origin:50% 100%;-webkit-text-stroke:0.3px #000">F8</div>
<svg class="ic" style="left:155px;top:134px" width="22" height="12"><path d="M1 6h3M5 1v10M5 1h3M5 11h3M17 1v10M17 1h-3M17 11h-3M17 6h3" stroke="#000" stroke-width="1.6" fill="none"/></svg>
<div class="sep" style="left:184px;top:134px;height:23px"></div>
<div style="position:absolute;left:191px;top:146px;white-space:nowrap;font-size:11.5px;color:#000;line-height:11px;width:22px;text-align:center;letter-spacing:-0.2px;transform:scaleY(0.85);transform-origin:50% 100%;-webkit-text-stroke:0.3px #000">F9</div>
<svg class="ic" style="left:191px;top:134px" width="22" height="12"><path d="M1 6h20" stroke="#000" stroke-width="1.6" fill="none"/></svg>
<div style="position:absolute;left:219px;top:146px;white-space:nowrap;font-size:11.5px;color:#000;line-height:11px;width:22px;text-align:center;letter-spacing:-0.2px;transform:scaleY(0.85);transform-origin:50% 100%;-webkit-text-stroke:0.3px #000">sF9</div>
<svg class="ic" style="left:219px;top:134px" width="22" height="12"><path d="M11 1v10" stroke="#000" stroke-width="1.6" fill="none"/></svg>
<div style="position:absolute;left:247px;top:146px;white-space:nowrap;font-size:11.5px;color:#000;line-height:11px;width:22px;text-align:center;letter-spacing:-0.2px;transform:scaleY(0.85);transform-origin:50% 100%;-webkit-text-stroke:0.3px #000">cF9</div>
<svg class="ic" style="left:247px;top:134px" width="22" height="12"><path d="M1 6h20" stroke="#000" stroke-width="1.6" fill="none"/><path d="M6 1l10 10M16 1l-10 10" stroke="#e00000" stroke-width="2" fill="none"/></svg>
<div style="position:absolute;left:275px;top:146px;white-space:nowrap;font-size:11.5px;color:#000;line-height:11px;width:22px;text-align:center;letter-spacing:-0.2px;transform:scaleY(0.85);transform-origin:50% 100%;-webkit-text-stroke:0.3px #000">cFl0</div>
<svg class="ic" style="left:275px;top:134px" width="22" height="12"><path d="M11 1v10" stroke="#000" stroke-width="1.6" fill="none"/><path d="M6 1l10 10M16 1l-10 10" stroke="#e00000" stroke-width="2" fill="none"/></svg>
<div class="sep" style="left:303px;top:134px;height:23px"></div>
<div style="position:absolute;left:311px;top:146px;white-space:nowrap;font-size:11.5px;color:#000;line-height:11px;width:22px;text-align:center;letter-spacing:-0.2px;transform:scaleY(0.85);transform-origin:50% 100%;-webkit-text-stroke:0.3px #000">sF7</div>
<svg class="ic" style="left:311px;top:134px" width="22" height="12"><path d="M0 6h3M3 1v9M7 9V1M5 4l2-3 2 3M14 1v9M14 6h3M17 1v9" stroke="#000" stroke-width="1.6" fill="none"/></svg>
<div style="position:absolute;left:339px;top:146px;white-space:nowrap;font-size:11.5px;color:#000;line-height:11px;width:22px;text-align:center;letter-spacing:-0.2px;transform:scaleY(0.85);transform-origin:50% 100%;-webkit-text-stroke:0.3px #000">sF8</div>
<svg class="ic" style="left:339px;top:134px" width="22" height="12"><path d="M0 6h3M3 1v9M7 1v9M5 7l2 3 2-3M14 1v9M14 6h3" stroke="#000" stroke-width="1.6" fill="none"/></svg>
<div style="position:absolute;left:367px;top:146px;white-space:nowrap;font-size:11.5px;color:#000;line-height:11px;width:22px;text-align:center;letter-spacing:-0.2px;transform:scaleY(0.85);transform-origin:50% 100%;-webkit-text-stroke:0.3px #000">aF7</div>
<svg class="ic" style="left:367px;top:134px" width="22" height="12"><path d="M1 1v9M1 6h3M4 1v9M9 9V1M7 4l2-3 2 3M14 1v9M14 6h5M19 1v9" stroke="#000" stroke-width="1.6" fill="none"/></svg>
<div style="position:absolute;left:395px;top:146px;white-space:nowrap;font-size:11.5px;color:#000;line-height:11px;width:22px;text-align:center;letter-spacing:-0.2px;transform:scaleY(0.85);transform-origin:50% 100%;-webkit-text-stroke:0.3px #000">aF8</div>
<svg class="ic" style="left:395px;top:134px" width="22" height="12"><path d="M1 1v9M1 6h3M4 1v9M9 1v9M7 7l2 3 2-3M14 1v9M14 6h5M19 1v9" stroke="#000" stroke-width="1.6" fill="none"/></svg>
<div class="sep" style="left:423px;top:134px;height:23px"></div>
<div style="position:absolute;left:431px;top:146px;white-space:nowrap;font-size:11.5px;color:#000;line-height:11px;width:22px;text-align:center;letter-spacing:-0.2px;transform:scaleY(0.85);transform-origin:50% 100%;-webkit-text-stroke:0.3px #000">saF5</div>
<svg class="ic" style="left:431px;top:134px" width="22" height="12"><path d="M0 6h20M4 1v9M9 1v9M14 1v9" stroke="#000" stroke-width="1.6" fill="none"/></svg>
<div style="position:absolute;left:459px;top:146px;white-space:nowrap;font-size:11.5px;color:#000;line-height:11px;width:22px;text-align:center;letter-spacing:-0.2px;transform:scaleY(0.85);transform-origin:50% 100%;-webkit-text-stroke:0.3px #000">saF6</div>
<svg class="ic" style="left:459px;top:134px" width="22" height="12"><path d="M0 6h20M4 1v9M9 1v9M14 1v9" stroke="#000" stroke-width="1.6" fill="none"/></svg>
<div style="position:absolute;left:487px;top:146px;white-space:nowrap;font-size:11.5px;color:#000;line-height:11px;width:22px;text-align:center;letter-spacing:-0.2px;transform:scaleY(0.85);transform-origin:50% 100%;-webkit-text-stroke:0.3px #000">saF7</div>
<svg class="ic" style="left:487px;top:134px" width="22" height="12"><path d="M1 1v9M5 1v9M10 1v9M15 1v9M19 1v9M1 6h19" stroke="#000" stroke-width="1.6" fill="none"/></svg>
<div style="position:absolute;left:515px;top:146px;white-space:nowrap;font-size:11.5px;color:#000;line-height:11px;width:22px;text-align:center;letter-spacing:-0.2px;transform:scaleY(0.85);transform-origin:50% 100%;-webkit-text-stroke:0.3px #000">saF8</div>
<svg class="ic" style="left:515px;top:134px" width="22" height="12"><path d="M1 1v9M5 1v9M10 1v9M15 1v9M19 1v9M1 6h19" stroke="#000" stroke-width="1.6" fill="none"/></svg>
<div class="sep" style="left:544px;top:134px;height:23px"></div>
<div style="position:absolute;left:551px;top:146px;white-space:nowrap;font-size:11.5px;color:#000;line-height:11px;width:22px;text-align:center;letter-spacing:-0.2px;transform:scaleY(0.85);transform-origin:50% 100%;-webkit-text-stroke:0.3px #000">aF5</div>
<svg class="ic" style="left:551px;top:134px" width="22" height="12"><path d="M11 11V1M8 4l3-3 3 3" stroke="#000" stroke-width="1.6" fill="none"/></svg>
<div style="position:absolute;left:579px;top:146px;white-space:nowrap;font-size:11.5px;color:#000;line-height:11px;width:22px;text-align:center;letter-spacing:-0.2px;transform:scaleY(0.85);transform-origin:50% 100%;-webkit-text-stroke:0.3px #000">caF5</div>
<svg class="ic" style="left:579px;top:134px" width="22" height="12"><path d="M11 1v10M8 8l3 3 3-3" stroke="#000" stroke-width="1.6" fill="none"/></svg>
<div style="position:absolute;left:607px;top:146px;white-space:nowrap;font-size:11.5px;color:#000;line-height:11px;width:22px;text-align:center;letter-spacing:-0.2px;transform:scaleY(0.85);transform-origin:50% 100%;-webkit-text-stroke:0.3px #000">caFl0</div>
<svg class="ic" style="left:607px;top:134px" width="22" height="12"><path d="M0 6h21M7 9l8-6" stroke="#000" stroke-width="1.6" fill="none"/></svg>
<svg class="ic" style="left:642px;top:135px" width="22" height="22" viewBox="0 0 22 22"><path d="M1 3v16M21 3v16M1 11h2M19 11h2" fill="none" stroke="#000" stroke-width="1.5"/><rect x="4" y="2" width="14" height="18" fill="#c8d8ff" stroke="#000" stroke-width="1.5"/><text x="6" y="16" font-family="Liberation Sans" font-size="10" font-weight="bold" fill="#1030e0">ST</text></svg>
<div class="sep" style="left:671px;top:134px;height:23px"></div>
<svg class="ic" style="left:678px;top:135px" width="22" height="22" viewBox="0 0 22 22"><path d="M1 6h6M6 1v9M14 1v9M14 6h6" fill="none" stroke="#000" stroke-width="1.5"/><rect x="0" y="14" width="12" height="7" fill="#e8e8e8" stroke="#555" stroke-width="1"/><path d="M10 20l9-9 3 3-9 9z" fill="#40b020"/></svg>
<svg class="ic" style="left:707px;top:135px" width="22" height="22" viewBox="0 0 22 22"><rect x="5" y="2" width="12" height="8" fill="#fff" stroke="#555" stroke-width="1" rx="4"/><rect x="1" y="4" width="5" height="3" fill="#333"/><path d="M14 9l6-6 2 2-6 6z" fill="#40b020"/><path d="M1 17h5M6 13v8M10 13c-2 2-2 6 0 8M14 13c2 2 2 6 0 8" fill="none" stroke="#000" stroke-width="1.3"/></svg>
<svg class="ic" style="left:735px;top:135px" width="22" height="22" viewBox="0 0 22 22"><rect x="4" y="2" width="12" height="8" fill="#fff" stroke="#555" stroke-width="1" rx="4"/><path d="M14 9l6-6 2 2-6 6z" fill="#40b020"/><path d="M1 17h3M6 13c-2 2-2 6 0 8M14 13c2 2 2 6 0 8M16 17h4" fill="none" stroke="#000" stroke-width="1.3"/></svg>
<div class="sep" style="left:763px;top:134px;height:23px"></div>
<svg class="ic" style="left:771px;top:135px" width="22" height="22" viewBox="0 0 22 22"><rect x="5" y="2" width="13" height="8" fill="#ccc" stroke="#999" stroke-width="1" rx="4"/><rect x="1" y="4" width="5" height="3" fill="#888"/><rect x="8" y="12" width="13" height="9" fill="#ddd" stroke="#999" stroke-width="1"/><path d="M1 17h4M5 13v8" fill="none" stroke="#999" stroke-width="1.3"/></svg>
<div class="sep" style="left:800px;top:134px;height:23px"></div>
<svg class="ic" style="left:807px;top:135px" width="22" height="22" viewBox="0 0 22 22"><rect x="5" y="2" width="13" height="8" fill="#fff" stroke="#555" stroke-width="1" rx="4"/><rect x="1" y="4" width="5" height="3" fill="#333"/><rect x="8" y="12" width="13" height="9" fill="#fff" stroke="#555" stroke-width="1"/><rect x="8" y="12" width="13" height="3" fill="#1a6ad8"/><path d="M1 17h4M5 13v8" fill="none" stroke="#000" stroke-width="1.3"/></svg>
<div class="sep" style="left:836px;top:134px;height:23px"></div>
<svg class="ic" style="left:843px;top:135px" width="22" height="22" viewBox="0 0 22 22"><path d="M2 3h10l4 6-6 10" fill="none" stroke="#999" stroke-width="4"/></svg>
<svg class="ic" style="left:871px;top:135px" width="22" height="22" viewBox="0 0 22 22"><rect x="1" y="2" width="16" height="18" fill="#ddd" stroke="#999" stroke-width="1"/><rect x="3" y="5" width="12" height="2" fill="#999"/><rect x="3" y="9" width="12" height="2" fill="#999"/><rect x="12" y="10" width="9" height="9" fill="#bbb"/></svg>
<svg class="ic" style="left:899px;top:135px" width="22" height="22" viewBox="0 0 22 22"><path d="M1 11l6-7v14z" fill="#999"/><rect x="6" y="2" width="10" height="13" fill="#ddd" stroke="#999" stroke-width="1"/><circle cx="14" cy="14" r="5" fill="#eee" stroke="#888" stroke-width="2"/><path d="M17 17l4 4" fill="none" stroke="#888" stroke-width="2"/></svg>
<svg class="ic" style="left:927px;top:135px" width="22" height="22" viewBox="0 0 22 22"><path d="M1 4l6 7-6 7z" fill="#999"/><rect x="6" y="2" width="10" height="13" fill="#ddd" stroke="#999" stroke-width="1"/><circle cx="14" cy="14" r="5" fill="#eee" stroke="#888" stroke-width="2"/><path d="M17 17l4 4" fill="none" stroke="#888" stroke-width="2"/></svg>
<svg class="ic" style="left:955px;top:135px" width="22" height="22" viewBox="0 0 22 22"><path d="M1 8h8M5 5l4 3-4 3" fill="none" stroke="#999" stroke-width="2"/><path d="M12 3h9M12 8h9M12 13h9M12 18h9" fill="none" stroke="#bbb" stroke-width="2"/></svg>
<svg class="ic" style="left:983px;top:135px" width="22" height="22" viewBox="0 0 22 22"><path d="M9 8H1M4 5L1 8l3 3" fill="none" stroke="#999" stroke-width="2"/><path d="M12 3h9M12 8h9M12 13h9M12 18h9" fill="none" stroke="#bbb" stroke-width="2"/></svg>
<div class="sep" style="left:1011px;top:134px;height:23px"></div>
<svg class="ic" style="left:1018px;top:135px" width="22" height="22" viewBox="0 0 22 22"><path d="M0 5h22M0 12h22M0 19h22" fill="none" stroke="#1040e0" stroke-width="1.3"/><rect x="3" y="3" width="3" height="4" fill="#1040e0"/><rect x="14" y="3" width="3" height="4" fill="#1040e0"/><rect x="3" y="10" width="3" height="4" fill="#1040e0"/><rect x="10" y="17" width="3" height="4" fill="#1040e0"/></svg>
<svg class="ic" style="left:1046px;top:135px" width="22" height="22" viewBox="0 0 22 22"><path d="M0 5h22M0 12h22M0 19h22" fill="none" stroke="#1040e0" stroke-width="1.3"/><rect x="3" y="3" width="3" height="4" fill="#1040e0"/><path d="M8 13l10-10 3 3-10 10z" fill="#e02020"/></svg>
<svg class="ic" style="left:1074px;top:135px" width="22" height="22" viewBox="0 0 22 22"><rect x="2" y="6" width="14" height="14" fill="#eee" stroke="#303030" stroke-width="1"/><circle cx="13" cy="9" r="7" fill="#fff" stroke="#1040e0" stroke-width="1.5"/><rect x="1" y="14" width="6" height="7" fill="#c00000"/></svg>
<div style="position:absolute;left:1100px;top:132px;width:29px;height:29px;background:linear-gradient(#fff6da,#fde7a8);border:1px solid #e5c365"></div>
<svg class="ic" style="left:1102px;top:135px" width="22" height="22" viewBox="0 0 22 22"><rect x="2" y="6" width="14" height="14" fill="#eee" stroke="#303030" stroke-width="1"/><circle cx="11" cy="10" r="7" fill="#fff" stroke="#1040e0" stroke-width="1.5"/><rect x="1" y="14" width="8" height="7" fill="#c00000"/><path d="M12 10l7-7 2 2-7 7z" fill="#e02020"/></svg>
<svg class="ic" style="left:1132px;top:135px" width="22" height="22" viewBox="0 0 22 22"><text x="0" y="14" font-family="Liberation Sans" font-size="12" font-weight="normal" fill="#000">ab</text><path d="M12 10h10" fill="none" stroke="#000" stroke-width="1"/><rect x="2" y="18" width="20" height="2.5" fill="#1a6ad8"/></svg>
<svg class="ic" style="left:1168px;top:135px" width="22" height="22" viewBox="0 0 22 22"><rect x="0" y="1" width="22" height="10" fill="#1a5ad8"/><text x="2" y="9" font-family="Liberation Sans" font-size="8" font-weight="bold" fill="#fff">DEV</text><circle cx="11" cy="15" r="5" fill="#fff" stroke="#202020" stroke-width="2"/><path d="M15 19l3 3" fill="none" stroke="#c06020" stroke-width="2"/></svg>
<svg class="ic" style="left:1196px;top:135px" width="22" height="22" viewBox="0 0 22 22"><rect x="0" y="1" width="22" height="10" fill="#1a5ad8"/><text x="2" y="9" font-family="Liberation Sans" font-size="8" font-weight="bold" fill="#fff">DEV</text><path d="M2 12v7h8M6 16l4 3-4 3" fill="none" stroke="#f0a020" stroke-width="2"/><path d="M12 13l7-7 3 3-7 7z" fill="#40b020"/><rect x="10" y="11" width="12" height="10" fill="#1a5ad8"/></svg>
<svg class="ic" style="left:1224px;top:135px" width="22" height="22" viewBox="0 0 22 22"><path d="M1 5h8M5 1v8" fill="none" stroke="#777" stroke-width="3"/><rect x="12" y="5" width="9" height="3" fill="#777"/><rect x="16" y="5" width="5" height="16" fill="#777"/><rect x="6" y="14" width="6" height="3" fill="#777"/></svg>
<svg class="ic" style="left:1252px;top:135px" width="22" height="22" viewBox="0 0 22 22"><rect x="1" y="5" width="12" height="3" fill="#777"/><rect x="14" y="8" width="6" height="13" fill="#777"/><rect x="4" y="14" width="9" height="3" fill="#777"/></svg>
<svg class="ic" style="left:1280px;top:135px" width="22" height="22" viewBox="0 0 22 22"><path d="M1 3h20M5 8h16M5 13h16M1 18h20" fill="none" stroke="#777" stroke-width="2.5"/></svg>
<svg class="ic" style="left:1308px;top:135px" width="22" height="22" viewBox="0 0 22 22"><circle cx="11" cy="6" r="5" fill="none" stroke="#999" stroke-width="1.5"/><path d="M3 14h16M3 19h16" fill="none" stroke="#999" stroke-width="2"/></svg>
<svg class="ic" style="left:1336px;top:135px" width="22" height="22" viewBox="0 0 22 22"><path d="M2 1v20h18M2 14l9-6 8 6M10 4h10" fill="none" stroke="#777" stroke-width="2"/></svg>
<svg class="ic" style="left:1364px;top:135px" width="22" height="22" viewBox="0 0 22 22"><rect x="6" y="1" width="14" height="8" fill="#ddd" stroke="#888" stroke-width="1" rx="4"/><rect x="1" y="3" width="5" height="3" fill="#888"/><path d="M1 17h4M5 13v8M8 13v8" fill="none" stroke="#777" stroke-width="1.3"/><rect x="10" y="12" width="11" height="9" fill="#ddd" stroke="#888" stroke-width="1"/></svg>
<div class="sep" style="left:1393px;top:134px;height:23px"></div>
<svg class="ic" style="left:1401px;top:135px" width="22" height="22" viewBox="0 0 22 22"><rect x="10" y="1" width="12" height="10" fill="#eee" stroke="#999" stroke-width="1"/><rect x="1" y="10" width="12" height="11" fill="#303030"/><rect x="4" y="12" width="6" height="4" fill="#eee"/><path d="M2 5h8M6 2l4 3-4 3" fill="none" stroke="#1040e0" stroke-width="2"/></svg>
<svg class="ic" style="left:1429px;top:135px" width="22" height="22" viewBox="0 0 22 22"><rect x="10" y="1" width="12" height="10" fill="#eee" stroke="#999" stroke-width="1"/><rect x="1" y="10" width="12" height="11" fill="#303030"/><rect x="4" y="12" width="6" height="4" fill="#eee"/><path d="M2 5h8M6 2l4 3-4 3" fill="none" stroke="#e02020" stroke-width="2"/></svg>
<div style="position:absolute;left:0px;top:163px;width:283px;height:767px;background:#33465f"></div>
<div style="position:absolute;left:0px;top:163px;width:283px;height:28px;background:linear-gradient(#4f6384,#3e5173)"></div>
<div style="position:absolute;left:4px;top:168px;white-space:nowrap;font-size:15px;color:#fff;line-height:20px">导航</div>
<svg class="ic" style="left:242px;top:170px" width="12" height="16"><path d="M3 1h6M4 1v8M8 1v8M2 9h8M6 9v6" stroke="#dfe6f0" stroke-width="1.6" fill="none"/></svg>
<svg class="ic" style="left:265px;top:172px" width="11" height="11"><path d="M1 1l9 9M10 1l-9 9" stroke="#dfe6f0" stroke-width="1.6"/></svg>
<div style="position:absolute;left:0px;top:191px;width:283px;height:2px;background:#7d8898"></div>
<div style="position:absolute;left:0px;top:193px;width:281px;height:35px;background:#bdc8d9"></div>
<div style="position:absolute;left:4px;top:196px;width:276px;height:30px;background:#c2ccdc;border:1px solid #b0bccd;border-radius:3px"></div>
<svg class="ic" style="left:10px;top:201px" width="30" height="18"><rect x="1.5" y="1.5" width="6" height="5" fill="#fff" stroke="#333"/><path d="M7.5 4.5h3.5M10.5 4.5v12.5h6M10.5 7.5h6" stroke="#1d2a44" fill="none"/><path d="M14 7l3 3h-6zM14 16l3-3h-6z" fill="#e02020"/><path d="M14 9v5" stroke="#e02020" stroke-width="1.2"/><path d="M29.5 11h-6l3 3z" fill="#1d2a44"/></svg>
<div style="position:absolute;left:46px;top:199px;width:1px;height:22px;background:#8d99ab"></div>
<svg class="ic" style="left:56px;top:201px" width="18" height="14"><rect x="1.5" y="1.5" width="6" height="5" fill="#fff" stroke="#333"/><path d="M7.5 4.5h3M10.5 4.5v7.5h6M10.5 4.5h6" stroke="#1d2a44" fill="none"/></svg>
<div style="position:absolute;left:82px;top:199px;width:1px;height:22px;background:#8d99ab"></div>
<svg class="ic" style="left:92px;top:202px" width="16" height="16" viewBox="0 0 16 16"><g fill="#3a3a3a"><circle cx="8" cy="8" r="5"/><rect x="6.5" y="0" width="3" height="16"/><rect x="0" y="6.5" width="16" height="3"/><rect x="6.5" y="0" width="3" height="16" transform="rotate(45 8 8)"/><rect x="6.5" y="0" width="3" height="16" transform="rotate(-45 8 8)"/></g><circle cx="8" cy="8" r="2.5" fill="#c2ccdc"/></svg>
<div style="position:absolute;left:118px;top:199px;width:1px;height:22px;background:#8d99ab"></div>
<div style="position:absolute;left:123px;top:196px;width:100px;height:29px;background:#fff;border:1px solid #8a96aa"></div>
<div style="position:absolute;left:127px;top:200px;white-space:nowrap;font-size:15px;color:#000;line-height:20px">全部</div>
<div style="position:absolute;left:206px;top:198px;width:15px;height:25px;background:#bfc9d9"></div>
<svg class="ic" style="left:208px;top:208px" width="11" height="6"><path d="M0.5 0.5h10l-5 5z" fill="#1b2538"/></svg>
<div style="position:absolute;left:0px;top:228px;width:281px;height:2px;background:#5d86c8"></div>
<div style="position:absolute;left:0px;top:228px;width:1px;height:702px;background:#6c7a90"></div>
<div style="position:absolute;left:1px;top:228px;width:1px;height:702px;background:#5d86c8"></div>
<div style="position:absolute;left:2px;top:230px;width:257px;height:700px;background:#354969"></div>
<div style="position:absolute;left:259px;top:230px;width:21px;height:700px;background:#f0f0f0"></div>
<div style="position:absolute;left:280px;top:228px;width:1px;height:702px;background:#5d86c8"></div>
<div style="position:absolute;left:281px;top:163px;width:2px;height:767px;background:#eef0f4"></div>
<div style="position:absolute;left:268px;top:250px;width:4px;height:385px;background:#868686;border-radius:2px"></div>
<div style="position:absolute;left:2px;top:729px;width:235px;height:25px;background:#fff5a8"></div>
<svg class="ic" style="left:6px;top:233px" width="16" height="16" viewBox="0 0 16 16"><path d="M3 2h7v8H0z" fill="#707070"/><rect x="5" y="6" width="4" height="10" fill="#f05050"/><rect x="9" y="5" width="4" height="11" fill="#c8c8c8"/><rect x="10" y="8" width="2" height="1" fill="#404040"/><rect x="10" y="11" width="2" height="1" fill="#404040"/><rect x="13" y="5" width="3" height="11" fill="#f8f8f8" stroke="#606060" stroke-width="1"/><rect x="11" y="5" width="2" height="2" fill="#30c030"/></svg>
<div class="tr" style="left:27px;top:232px;color:#fff">工程</div>
<svg class="ic" style="left:24px;top:258px" width="16" height="16" viewBox="0 0 16 16"><rect x="0" y="1" width="16" height="14" fill="#101010"/><rect x="1" y="2" width="14" height="2" fill="#f0f0f0"/><rect x="1" y="5" width="4" height="9" fill="#f05050"/><rect x="5" y="5" width="4" height="9" fill="#c8c8c8"/><rect x="6" y="7" width="2" height="1" fill="#404040"/><rect x="6" y="10" width="2" height="1" fill="#404040"/><rect x="10" y="5" width="5" height="9" fill="#209030"/><rect x="12" y="7" width="1" height="5" fill="#e0e0e0"/></svg>
<div class="tr" style="left:45px;top:257px;color:#fff">模块配置图</div>
<div class="exp" style="left:5px;top:285px"></div>
<svg class="ic" style="left:24px;top:283px" width="16" height="16" viewBox="0 0 16 16"><rect x="0" y="6" width="16" height="10" fill="#f0c040" stroke="#a07010" stroke-width="1"/><rect x="5" y="1" width="11" height="9" fill="#70d0e8" stroke="#303030" stroke-width="1"/><rect x="4" y="10" width="12" height="4" fill="#303030"/><path d="M1 4l6 6" fill="none" stroke="#30a030" stroke-width="2.5"/></svg>
<div class="tr" style="left:45px;top:282px;color:#fff">程序</div>
<svg class="ic" style="left:42px;top:308px" width="16" height="16" viewBox="0 0 16 16"><rect x="0" y="6" width="16" height="10" fill="#f0c040" stroke="#a07010" stroke-width="1" rx="2"/><rect x="4" y="2" width="5" height="12" fill="#f04848"/><rect x="9" y="1" width="6" height="13" fill="#e8e8e8" stroke="#303030" stroke-width="1"/><rect x="10" y="6" width="4" height="1" fill="#303030"/><rect x="10" y="9" width="4" height="1" fill="#303030"/></svg>
<div class="tr" style="left:63px;top:307px;color:#fff">初始</div>
<div class="exp" style="left:23px;top:335px"></div>
<svg class="ic" style="left:42px;top:333px" width="16" height="16" viewBox="0 0 16 16"><rect x="0" y="6" width="16" height="10" fill="#f0c040" stroke="#a07010" stroke-width="1" rx="2"/><rect x="4" y="2" width="5" height="12" fill="#f04848"/><rect x="9" y="1" width="6" height="13" fill="#e8e8e8" stroke="#303030" stroke-width="1"/><rect x="10" y="6" width="4" height="1" fill="#303030"/><rect x="10" y="9" width="4" height="1" fill="#303030"/></svg>
<div class="tr" style="left:63px;top:332px;color:#fff">扫描</div>
<div class="exp" style="left:41px;top:360px"></div>
<svg class="ic" style="left:60px;top:358px" width="16" height="16" viewBox="0 0 16 16"><rect x="0" y="9" width="9" height="8" fill="#505050"/><rect x="1" y="12" width="5" height="1" fill="#ddd"/><rect x="6" y="1" width="10" height="11" fill="#e8e8e8" stroke="#888" stroke-width="1"/><rect x="8" y="4" width="2" height="5" fill="#e02020"/><rect x="12" y="4" width="2" height="5" fill="#e02020"/><path d="M2 8c0-4 3-5 6-5" fill="none" stroke="#20a020" stroke-width="2"/></svg>
<div class="tr" style="left:81px;top:357px;color:#fff">MAIN</div>
<div class="exp" style="left:59px;top:385px"></div>
<svg class="ic" style="left:78px;top:383px" width="16" height="16" viewBox="0 0 16 16"><rect x="0.5" y="4.5" width="15" height="11" fill="#f2c040" stroke="#b08020" stroke-width="1" rx="2"/><path d="M4.5 0.5h7l3 3v11h-10z" fill="#f4f4f4" stroke="#9a9a9a" stroke-width="1"/><rect x="6" y="3" width="2" height="6" fill="#e00000"/><rect x="10" y="3" width="2" height="6" fill="#e00000"/><rect x="4" y="6" width="2" height="1.5" fill="#e00000"/><rect x="12" y="6" width="2" height="1.5" fill="#e00000"/></svg>
<div class="tr" style="left:99px;top:382px;color:#fff">报警</div>
<svg class="ic" style="left:96px;top:408px" width="16" height="16" viewBox="0 0 16 16"><rect x="0.5" y="0.5" width="10" height="13" fill="#9fd4f4" stroke="#c0c0c0" stroke-width="1"/><rect x="4.5" y="6.5" width="11" height="9" fill="#fff" stroke="#4a4aff" stroke-width="1"/><rect x="5" y="9" width="10" height="1" fill="#4a4aff"/><rect x="5" y="12" width="10" height="1" fill="#4a4aff"/><rect x="8" y="7" width="1" height="8" fill="#4a4aff"/></svg>
<div class="tr" style="left:117px;top:407px;color:#fff">局部标签</div>
<svg class="ic" style="left:96px;top:433px" width="16" height="16" viewBox="0 0 16 16"><defs><linearGradient id="gd" x1="0" y1="0" x2="1" y2="1"><stop offset="0" stop-color="#fff"/><stop offset="1" stop-color="#c8c8c8"/></linearGradient></defs><path d="M2.5 1.5h8l3 3v11h-11z" fill="url(#gd)" stroke="#9a9a9a" stroke-width="1"/><rect x="5" y="5" width="2" height="7" fill="#e00000"/><rect x="9" y="5" width="2" height="7" fill="#e00000"/><rect x="2" y="8" width="3" height="1.5" fill="#e00000"/><rect x="11" y="8" width="3" height="1.5" fill="#e00000"/></svg>
<div class="tr" style="left:117px;top:432px;color:#fff">程序本体</div>
<div class="exp" style="left:59px;top:460px"></div>
<svg class="ic" style="left:78px;top:458px" width="16" height="16" viewBox="0 0 16 16"><rect x="0.5" y="4.5" width="15" height="11" fill="#f2c040" stroke="#b08020" stroke-width="1" rx="2"/><path d="M4.5 0.5h7l3 3v11h-10z" fill="#f4f4f4" stroke="#9a9a9a" stroke-width="1"/><rect x="6" y="3" width="2" height="6" fill="#e00000"/><rect x="10" y="3" width="2" height="6" fill="#e00000"/><rect x="4" y="6" width="2" height="1.5" fill="#e00000"/><rect x="12" y="6" width="2" height="1.5" fill="#e00000"/></svg>
<div class="tr" style="left:99px;top:457px;color:#fff">手动</div>
<svg class="ic" style="left:96px;top:483px" width="16" height="16" viewBox="0 0 16 16"><rect x="0.5" y="0.5" width="10" height="13" fill="#9fd4f4" stroke="#c0c0c0" stroke-width="1"/><rect x="4.5" y="6.5" width="11" height="9" fill="#fff" stroke="#4a4aff" stroke-width="1"/><rect x="5" y="9" width="10" height="1" fill="#4a4aff"/><rect x="5" y="12" width="10" height="1" fill="#4a4aff"/><rect x="8" y="7" width="1" height="8" fill="#4a4aff"/></svg>
<div class="tr" style="left:117px;top:482px;color:#fff">局部标签</div>
<svg class="ic" style="left:96px;top:508px" width="16" height="16" viewBox="0 0 16 16"><defs><linearGradient id="gd" x1="0" y1="0" x2="1" y2="1"><stop offset="0" stop-color="#fff"/><stop offset="1" stop-color="#c8c8c8"/></linearGradient></defs><path d="M2.5 1.5h8l3 3v11h-11z" fill="url(#gd)" stroke="#9a9a9a" stroke-width="1"/><rect x="5" y="5" width="2" height="7" fill="#e00000"/><rect x="9" y="5" width="2" height="7" fill="#e00000"/><rect x="2" y="8" width="3" height="1.5" fill="#e00000"/><rect x="11" y="8" width="3" height="1.5" fill="#e00000"/></svg>
<div class="tr" style="left:117px;top:507px;color:#fff">程序本体</div>
<div class="exp" style="left:59px;top:535px"></div>
<svg class="ic" style="left:78px;top:533px" width="16" height="16" viewBox="0 0 16 16"><rect x="0.5" y="4.5" width="15" height="11" fill="#f2c040" stroke="#b08020" stroke-width="1" rx="2"/><path d="M4.5 0.5h7l3 3v11h-10z" fill="#f4f4f4" stroke="#9a9a9a" stroke-width="1"/><rect x="6" y="3" width="2" height="6" fill="#e00000"/><rect x="10" y="3" width="2" height="6" fill="#e00000"/><rect x="4" y="6" width="2" height="1.5" fill="#e00000"/><rect x="12" y="6" width="2" height="1.5" fill="#e00000"/></svg>
<div class="tr" style="left:99px;top:532px;color:#fff">复位</div>
<svg class="ic" style="left:96px;top:558px" width="16" height="16" viewBox="0 0 16 16"><rect x="0.5" y="0.5" width="10" height="13" fill="#9fd4f4" stroke="#c0c0c0" stroke-width="1"/><rect x="4.5" y="6.5" width="11" height="9" fill="#fff" stroke="#4a4aff" stroke-width="1"/><rect x="5" y="9" width="10" height="1" fill="#4a4aff"/><rect x="5" y="12" width="10" height="1" fill="#4a4aff"/><rect x="8" y="7" width="1" height="8" fill="#4a4aff"/></svg>
<div class="tr" style="left:117px;top:557px;color:#fff">局部标签</div>
<svg class="ic" style="left:96px;top:583px" width="16" height="16" viewBox="0 0 16 16"><defs><linearGradient id="gd" x1="0" y1="0" x2="1" y2="1"><stop offset="0" stop-color="#fff"/><stop offset="1" stop-color="#c8c8c8"/></linearGradient></defs><path d="M2.5 1.5h8l3 3v11h-11z" fill="url(#gd)" stroke="#9a9a9a" stroke-width="1"/><rect x="5" y="5" width="2" height="7" fill="#e00000"/><rect x="9" y="5" width="2" height="7" fill="#e00000"/><rect x="2" y="8" width="3" height="1.5" fill="#e00000"/><rect x="11" y="8" width="3" height="1.5" fill="#e00000"/></svg>
<div class="tr" style="left:117px;top:582px;color:#fff">程序本体</div>
<div class="exp" style="left:59px;top:610px"></div>
<svg class="ic" style="left:78px;top:608px" width="16" height="16" viewBox="0 0 16 16"><rect x="0.5" y="4.5" width="15" height="11" fill="#f2c040" stroke="#b08020" stroke-width="1" rx="2"/><path d="M4.5 0.5h7l3 3v11h-10z" fill="#f4f4f4" stroke="#9a9a9a" stroke-width="1"/><rect x="6" y="3" width="2" height="6" fill="#e00000"/><rect x="10" y="3" width="2" height="6" fill="#e00000"/><rect x="4" y="6" width="2" height="1.5" fill="#e00000"/><rect x="12" y="6" width="2" height="1.5" fill="#e00000"/></svg>
<div class="tr" style="left:99px;top:607px;color:#fff">自动</div>
<svg class="ic" style="left:96px;top:633px" width="16" height="16" viewBox="0 0 16 16"><rect x="0.5" y="0.5" width="10" height="13" fill="#9fd4f4" stroke="#c0c0c0" stroke-width="1"/><rect x="4.5" y="6.5" width="11" height="9" fill="#fff" stroke="#4a4aff" stroke-width="1"/><rect x="5" y="9" width="10" height="1" fill="#4a4aff"/><rect x="5" y="12" width="10" height="1" fill="#4a4aff"/><rect x="8" y="7" width="1" height="8" fill="#4a4aff"/></svg>
<div class="tr" style="left:117px;top:632px;color:#fff">局部标签</div>
<svg class="ic" style="left:96px;top:658px" width="16" height="16" viewBox="0 0 16 16"><defs><linearGradient id="gd" x1="0" y1="0" x2="1" y2="1"><stop offset="0" stop-color="#fff"/><stop offset="1" stop-color="#c8c8c8"/></linearGradient></defs><path d="M2.5 1.5h8l3 3v11h-11z" fill="url(#gd)" stroke="#9a9a9a" stroke-width="1"/><rect x="5" y="5" width="2" height="7" fill="#e00000"/><rect x="9" y="5" width="2" height="7" fill="#e00000"/><rect x="2" y="8" width="3" height="1.5" fill="#e00000"/><rect x="11" y="8" width="3" height="1.5" fill="#e00000"/></svg>
<div class="tr" style="left:117px;top:657px;color:#fff">程序本体</div>
<div class="exp" style="left:59px;top:685px"></div>
<svg class="ic" style="left:78px;top:683px" width="16" height="16" viewBox="0 0 16 16"><rect x="0.5" y="4.5" width="15" height="11" fill="#f2c040" stroke="#b08020" stroke-width="1" rx="2"/><path d="M4.5 0.5h7l3 3v11h-10z" fill="#f4f4f4" stroke="#9a9a9a" stroke-width="1"/><rect x="6" y="3" width="2" height="6" fill="#e00000"/><rect x="10" y="3" width="2" height="6" fill="#e00000"/><rect x="4" y="6" width="2" height="1.5" fill="#e00000"/><rect x="12" y="6" width="2" height="1.5" fill="#e00000"/></svg>
<div class="tr" style="left:99px;top:682px;color:#fff">通讯读测高仪数据</div>
<svg class="ic" style="left:96px;top:708px" width="16" height="16" viewBox="0 0 16 16"><rect x="0.5" y="0.5" width="10" height="13" fill="#9fd4f4" stroke="#c0c0c0" stroke-width="1"/><rect x="4.5" y="6.5" width="11" height="9" fill="#fff" stroke="#4a4aff" stroke-width="1"/><rect x="5" y="9" width="10" height="1" fill="#4a4aff"/><rect x="5" y="12" width="10" height="1" fill="#4a4aff"/><rect x="8" y="7" width="1" height="8" fill="#4a4aff"/></svg>
<div class="tr" style="left:117px;top:707px;color:#fff">局部标签</div>
<svg class="ic" style="left:96px;top:733px" width="16" height="16" viewBox="0 0 16 16"><defs><linearGradient id="gd" x1="0" y1="0" x2="1" y2="1"><stop offset="0" stop-color="#fff"/><stop offset="1" stop-color="#c8c8c8"/></linearGradient></defs><path d="M2.5 1.5h8l3 3v11h-11z" fill="url(#gd)" stroke="#9a9a9a" stroke-width="1"/><rect x="5" y="5" width="2" height="7" fill="#e00000"/><rect x="9" y="5" width="2" height="7" fill="#e00000"/><rect x="2" y="8" width="3" height="1.5" fill="#e00000"/><rect x="11" y="8" width="3" height="1.5" fill="#e00000"/></svg>
<div class="tr" style="left:117px;top:732px;color:#000">程序本体</div>
<svg class="ic" style="left:42px;top:758px" width="16" height="16" viewBox="0 0 16 16"><rect x="0" y="6" width="16" height="10" fill="#f0c040" stroke="#a07010" stroke-width="1" rx="2"/><rect x="4" y="2" width="5" height="12" fill="#f04848"/><rect x="9" y="1" width="6" height="13" fill="#e8e8e8" stroke="#303030" stroke-width="1"/><rect x="10" y="6" width="4" height="1" fill="#303030"/><rect x="10" y="9" width="4" height="1" fill="#303030"/></svg>
<div class="tr" style="left:63px;top:757px;color:#fff">恒定周期</div>
<svg class="ic" style="left:42px;top:783px" width="16" height="16" viewBox="0 0 16 16"><rect x="0" y="6" width="16" height="10" fill="#f0c040" stroke="#a07010" stroke-width="1" rx="2"/><rect x="4" y="2" width="5" height="12" fill="#f04848"/><rect x="9" y="1" width="6" height="13" fill="#e8e8e8" stroke="#303030" stroke-width="1"/><rect x="10" y="6" width="4" height="1" fill="#303030"/><rect x="10" y="9" width="4" height="1" fill="#303030"/></svg>
<div class="tr" style="left:63px;top:782px;color:#fff">事件</div>
<svg class="ic" style="left:42px;top:808px" width="16" height="16" viewBox="0 0 16 16"><rect x="0" y="6" width="16" height="10" fill="#f0c040" stroke="#a07010" stroke-width="1" rx="2"/><rect x="4" y="2" width="5" height="12" fill="#f04848"/><rect x="9" y="1" width="6" height="13" fill="#e8e8e8" stroke="#303030" stroke-width="1"/><rect x="10" y="6" width="4" height="1" fill="#303030"/><rect x="10" y="9" width="4" height="1" fill="#303030"/></svg>
<div class="tr" style="left:63px;top:807px;color:#fff">待机</div>
<svg class="ic" style="left:42px;top:833px" width="16" height="16" viewBox="0 0 16 16"><rect x="0" y="6" width="16" height="10" fill="#f0c040" stroke="#a07010" stroke-width="1" rx="2"/><rect x="4" y="2" width="5" height="12" fill="#f04848"/><rect x="9" y="1" width="6" height="13" fill="#e8e8e8" stroke="#303030" stroke-width="1"/><rect x="10" y="6" width="4" height="1" fill="#303030"/><rect x="10" y="9" width="4" height="1" fill="#303030"/></svg>
<div class="tr" style="left:63px;top:832px;color:#fff">无执行类型指定</div>
<svg class="ic" style="left:42px;top:858px" width="16" height="16" viewBox="0 0 16 16"><rect x="2" y="1" width="9" height="11" fill="#e0e0e0" stroke="#9a9a9a" stroke-width="1"/><rect x="4" y="2" width="9" height="11" fill="#f0f0f0" stroke="#9a9a9a" stroke-width="1"/><rect x="6" y="4" width="2" height="6" fill="#b0b0b0"/><rect x="9" y="5" width="3" height="1" fill="#909090"/><rect x="0.5" y="7.5" width="15" height="8" fill="#f2d060" stroke="#b08020" stroke-width="1" rx="1.5"/><rect x="3" y="10" width="10" height="1" fill="#fff4c0"/><rect x="3" y="12" width="10" height="1" fill="#fff4c0"/></svg>
<div class="tr" style="left:63px;top:857px;color:#fff">未登录程序</div>
<svg class="ic" style="left:24px;top:883px" width="16" height="16" viewBox="0 0 16 16"><rect x="0" y="6" width="16" height="10" fill="#f0c040" stroke="#a07010" stroke-width="1" rx="2"/><rect x="3" y="1" width="12" height="7" fill="#2080e0"/><rect x="4" y="8" width="9" height="5" fill="#30a030"/></svg>
<div class="tr" style="left:45px;top:882px;color:#fff">FB/FUN</div>
<div class="exp" style="left:5px;top:910px"></div>
<svg class="ic" style="left:24px;top:908px" width="16" height="16" viewBox="0 0 16 16"><rect x="0" y="6" width="16" height="10" fill="#f0c040" stroke="#a07010" stroke-width="1" rx="2"/><rect x="4" y="2" width="11" height="12" fill="#fff" stroke="#4040c0" stroke-width="1"/><circle cx="6" cy="5" r="4" fill="#40a0e0"/></svg>
<div class="tr" style="left:45px;top:907px;color:#fff">标签</div>
<svg class="ic" style="left:283px;top:163px" width="1588" height="28"><defs><pattern id="tabpat" width="4" height="4" patternUnits="userSpaceOnUse"><rect width="4" height="4" fill="#2e4161"/><rect x="0" y="0" width="1" height="1" fill="#384c72"/><rect x="2" y="2" width="1" height="1" fill="#384c72"/><rect x="1" y="1" width="1" height="1" fill="#283859"/><rect x="3" y="3" width="1" height="1" fill="#283859"/></pattern></defs><rect width="1588" height="28" fill="url(#tabpat)"/></svg>
<div style="position:absolute;left:283px;top:191px;width:6px;height:739px;background:#2d3e5c"></div>
<svg class="ic" style="left:297px;top:168px" width="16" height="19"><path d="M0.5 0.5h11l4 4v14h-15z" fill="#fff" stroke="#777"/><path d="M11.5 0.5v4h4" fill="#ddd" stroke="#999"/><path d="M5.5 5v9M9.5 5v9" stroke="#e00000" stroke-width="2.2"/><path d="M2 9.5h3M10 9.5h3" stroke="#e00000" stroke-width="2"/></svg>
<div style="position:absolute;left:319px;top:168px;white-space:nowrap;font-size:15px;color:#fff;line-height:20px">手动 [PRG] [LD] 1356步</div>
<div style="position:absolute;left:505px;top:163px;width:275px;height:33px;background:linear-gradient(#fff6dc,#fde6a4);border-radius:3px 3px 0 0"></div>
<svg class="ic" style="left:513px;top:168px" width="16" height="19"><path d="M0.5 0.5h11l4 4v14h-15z" fill="#fff" stroke="#777"/><path d="M11.5 0.5v4h4" fill="#ddd" stroke="#999"/><path d="M5.5 5v9M9.5 5v9" stroke="#e00000" stroke-width="2.2"/><path d="M2 9.5h3M10 9.5h3" stroke="#e00000" stroke-width="2"/></svg>
<div style="position:absolute;left:535px;top:168px;white-space:nowrap;font-size:15px;color:#000;line-height:20px">通讯读测高仪数据 [PRG] [LD] ...</div>
<svg class="ic" style="left:763px;top:171px" width="12" height="12"><path d="M1 1l10 10M11 1l-10 10" stroke="#6b5a34" stroke-width="1.8"/></svg>
<svg class="ic" style="left:787px;top:168px" width="16" height="19"><path d="M0.5 0.5h11l4 4v14h-15z" fill="#fff" stroke="#777"/><path d="M11.5 0.5v4h4" fill="#ddd" stroke="#999"/><path d="M5.5 5v9M9.5 5v9" stroke="#e00000" stroke-width="2.2"/><path d="M2 9.5h3M10 9.5h3" stroke="#e00000" stroke-width="2"/></svg>
<div style="position:absolute;left:809px;top:168px;white-space:nowrap;font-size:15px;color:#fff;line-height:20px">报警 [PRG] [LD] 488步</div>
<svg class="ic" style="left:994px;top:168px" width="16" height="19"><path d="M0.5 0.5h11l4 4v14h-15z" fill="#fff" stroke="#777"/><path d="M11.5 0.5v4h4" fill="#ddd" stroke="#999"/><path d="M5.5 5v9M9.5 5v9" stroke="#e00000" stroke-width="2.2"/><path d="M2 9.5h3M10 9.5h3" stroke="#e00000" stroke-width="2"/></svg>
<div style="position:absolute;left:1016px;top:168px;white-space:nowrap;font-size:15px;color:#fff;line-height:20px">复位 [PRG] [LD] 554步</div>
<svg class="ic" style="left:1201px;top:168px" width="16" height="19"><path d="M0.5 0.5h11l4 4v14h-15z" fill="#fff" stroke="#777"/><path d="M11.5 0.5v4h4" fill="#ddd" stroke="#999"/><path d="M5.5 5v9M9.5 5v9" stroke="#e00000" stroke-width="2.2"/><path d="M2 9.5h3M10 9.5h3" stroke="#e00000" stroke-width="2"/></svg>
<div style="position:absolute;left:1223px;top:168px;white-space:nowrap;font-size:15px;color:#fff;line-height:20px">自动 [PRG] [LD] 2267步</div>
<svg class="ic" style="left:490px;top:172px" width="11" height="11"><path d="M1 1l9 9M10 1l-9 9" stroke="#3e5173" stroke-width="1.6"/></svg>
<svg class="ic" style="left:972px;top:172px" width="11" height="11"><path d="M1 1l9 9M10 1l-9 9" stroke="#3e5173" stroke-width="1.6"/></svg>
<svg class="ic" style="left:1179px;top:172px" width="11" height="11"><path d="M1 1l9 9M10 1l-9 9" stroke="#3e5173" stroke-width="1.6"/></svg>
<svg class="ic" style="left:1395px;top:172px" width="11" height="11"><path d="M1 1l9 9M10 1l-9 9" stroke="#3e5173" stroke-width="1.6"/></svg>
<svg class="ic" style="left:1864px;top:171px" width="7" height="12"><path d="M7 1l-6 5 6 5z" fill="#cfd8e6"/></svg>
<div style="position:absolute;left:289px;top:191px;width:1582px;height:739px;background:#fde8a6"></div>
<div style="position:absolute;left:290px;top:195px;width:1581px;height:735px;background:#a0a0a0"></div>
<div style="position:absolute;left:291px;top:196px;width:1580px;height:734px;background:#6c6c6c"></div>
<div style="position:absolute;left:292px;top:197px;width:1579px;height:733px;background:#9a9a9a"></div>
<div style="position:absolute;left:293px;top:198px;width:1578px;height:732px;background:#6c6c6c"></div>
<div style="position:absolute;left:294px;top:199px;width:1577px;height:731px;background:#fff"></div>
<div style="position:absolute;left:294px;top:199px;width:130px;height:21px;background:#8fafe6"></div>
<div style="position:absolute;left:297px;top:199px;white-space:nowrap;font-size:16px;color:#000;line-height:20px;letter-spacing:0.5px">监视写入</div>
<div style="position:absolute;left:373px;top:199px;width:1px;height:21px;background-image:linear-gradient(#fff 50%,transparent 50%);background-size:1px 2px"></div>
<div style="position:absolute;left:403px;top:201px;width:19px;height:17px;background:linear-gradient(#a9c4f0,#7aa0e0);border:1px solid #2a7ae0"></div>
<svg class="ic" style="left:409px;top:208px" width="8" height="5"><path d="M0 0h7l-3.5 4z" fill="#000"/></svg>
<div style="position:absolute;left:424px;top:199px;width:102px;height:21px;background:linear-gradient(#c6dafa,#6e98dd);border-right:1px solid #7a78a0;border-bottom:1px solid #7373a0"></div>
<div style="position:absolute;left:424px;top:199px;width:102px;text-align:center;font-size:15px;line-height:20px;color:#000">1</div>
<div style="position:absolute;left:526px;top:199px;width:102px;height:21px;background:linear-gradient(#c6dafa,#6e98dd);border-right:1px solid #7a78a0;border-bottom:1px solid #7373a0"></div>
<div style="position:absolute;left:526px;top:199px;width:102px;text-align:center;font-size:15px;line-height:20px;color:#000">2</div>
<div style="position:absolute;left:628px;top:199px;width:102px;height:21px;background:linear-gradient(#c6dafa,#6e98dd);border-right:1px solid #7a78a0;border-bottom:1px solid #7373a0"></div>
<div style="position:absolute;left:628px;top:199px;width:102px;text-align:center;font-size:15px;line-height:20px;color:#000">3</div>
<div style="position:absolute;left:730px;top:199px;width:102px;height:21px;background:linear-gradient(#c6dafa,#6e98dd);border-right:1px solid #7a78a0;border-bottom:1px solid #7373a0"></div>
<div style="position:absolute;left:730px;top:199px;width:102px;text-align:center;font-size:15px;line-height:20px;color:#000">4</div>
<div style="position:absolute;left:832px;top:199px;width:102px;height:21px;background:linear-gradient(#c6dafa,#6e98dd);border-right:1px solid #7a78a0;border-bottom:1px solid #7373a0"></div>
<div style="position:absolute;left:832px;top:199px;width:102px;text-align:center;font-size:15px;line-height:20px;color:#000">5</div>
<div style="position:absolute;left:934px;top:199px;width:102px;height:21px;background:linear-gradient(#c6dafa,#6e98dd);border-right:1px solid #7a78a0;border-bottom:1px solid #7373a0"></div>
<div style="position:absolute;left:934px;top:199px;width:102px;text-align:center;font-size:15px;line-height:20px;color:#000">6</div>
<div style="position:absolute;left:1036px;top:199px;width:102px;height:21px;background:linear-gradient(#c6dafa,#6e98dd);border-right:1px solid #7a78a0;border-bottom:1px solid #7373a0"></div>
<div style="position:absolute;left:1036px;top:199px;width:102px;text-align:center;font-size:15px;line-height:20px;color:#000">7</div>
<div style="position:absolute;left:1138px;top:199px;width:102px;height:21px;background:linear-gradient(#c6dafa,#6e98dd);border-right:1px solid #7a78a0;border-bottom:1px solid #7373a0"></div>
<div style="position:absolute;left:1138px;top:199px;width:102px;text-align:center;font-size:15px;line-height:20px;color:#000">8</div>
<div style="position:absolute;left:1240px;top:199px;width:102px;height:21px;background:linear-gradient(#c6dafa,#6e98dd);border-right:1px solid #7a78a0;border-bottom:1px solid #7373a0"></div>
<div style="position:absolute;left:1240px;top:199px;width:102px;text-align:center;font-size:15px;line-height:20px;color:#000">9</div>
<div style="position:absolute;left:1342px;top:199px;width:102px;height:21px;background:linear-gradient(#c6dafa,#6e98dd);border-right:1px solid #7a78a0;border-bottom:1px solid #7373a0"></div>
<div style="position:absolute;left:1342px;top:199px;width:102px;text-align:center;font-size:15px;line-height:20px;color:#000">10</div>
<div style="position:absolute;left:1444px;top:199px;width:102px;height:21px;background:linear-gradient(#c6dafa,#6e98dd);border-right:1px solid #7a78a0;border-bottom:1px solid #7373a0"></div>
<div style="position:absolute;left:1444px;top:199px;width:102px;text-align:center;font-size:15px;line-height:20px;color:#000">11</div>
<div style="position:absolute;left:1546px;top:199px;width:102px;height:21px;background:linear-gradient(#c6dafa,#6e98dd);border-right:1px solid #7a78a0;border-bottom:1px solid #7373a0"></div>
<div style="position:absolute;left:1546px;top:199px;width:102px;text-align:center;font-size:15px;line-height:20px;color:#000">12</div>
<div style="position:absolute;left:1648px;top:199px;width:102px;height:21px;background:linear-gradient(#c6dafa,#6e98dd);border-right:1px solid #7a78a0;border-bottom:1px solid #7373a0"></div>
<div style="position:absolute;left:1648px;top:199px;width:102px;text-align:center;font-size:15px;line-height:20px;color:#000">13</div>
<div style="position:absolute;left:1750px;top:199px;width:102px;height:21px;background:linear-gradient(#c6dafa,#6e98dd);border-right:1px solid #7a78a0;border-bottom:1px solid #7373a0"></div>
<div style="position:absolute;left:1750px;top:199px;width:102px;text-align:center;font-size:15px;line-height:20px;color:#000">14</div>
<div style="position:absolute;left:294px;top:220px;width:28px;height:118px;background:linear-gradient(#c8dbfa,#5a87d6);border-right:1px solid #7d88a8;border-bottom:1px solid #6f7fa6"></div>
<div style="position:absolute;left:298px;top:269px;white-space:nowrap;font-size:15px;color:#000;line-height:20px">1</div>
<div style="position:absolute;left:373px;top:220px;width:51px;height:118px;background:#add8e6"></div>
<div style="position:absolute;left:294px;top:338px;width:28px;height:118px;background:linear-gradient(#c8dbfa,#5a87d6);border-right:1px solid #7d88a8;border-bottom:1px solid #6f7fa6"></div>
<div style="position:absolute;left:298px;top:387px;white-space:nowrap;font-size:15px;color:#000;line-height:20px">2</div>
<div style="position:absolute;left:373px;top:338px;width:51px;height:118px;background:#add8e6"></div>
<div style="position:absolute;left:294px;top:456px;width:28px;height:118px;background:linear-gradient(#c8dbfa,#5a87d6);border-right:1px solid #7d88a8;border-bottom:1px solid #6f7fa6"></div>
<div style="position:absolute;left:298px;top:505px;white-space:nowrap;font-size:15px;color:#000;line-height:20px">3</div>
<div style="position:absolute;left:373px;top:456px;width:51px;height:118px;background:#add8e6"></div>
<div style="position:absolute;left:294px;top:574px;width:28px;height:118px;background:linear-gradient(#c8dbfa,#5a87d6);border-right:1px solid #7d88a8;border-bottom:1px solid #6f7fa6"></div>
<div style="position:absolute;left:298px;top:623px;white-space:nowrap;font-size:15px;color:#000;line-height:20px">4</div>
<div style="position:absolute;left:373px;top:574px;width:51px;height:118px;background:#add8e6"></div>
<div style="position:absolute;left:294px;top:692px;width:28px;height:118px;background:linear-gradient(#c8dbfa,#5a87d6);border-right:1px solid #7d88a8;border-bottom:1px solid #6f7fa6"></div>
<div style="position:absolute;left:298px;top:741px;white-space:nowrap;font-size:15px;color:#000;line-height:20px">5</div>
<div style="position:absolute;left:373px;top:692px;width:51px;height:118px;background:#add8e6"></div>
<div style="position:absolute;left:294px;top:810px;width:28px;height:118px;background:linear-gradient(#c8dbfa,#5a87d6);border-right:1px solid #7d88a8;border-bottom:1px solid #6f7fa6"></div>
<div style="position:absolute;left:298px;top:859px;white-space:nowrap;font-size:15px;color:#000;line-height:20px">6</div>
<div style="position:absolute;left:373px;top:810px;width:51px;height:118px;background:#add8e6"></div>
<div style="position:absolute;left:294px;top:928px;width:28px;height:2px;background:#c8dbfa"></div>
<div style="position:absolute;left:373px;top:928px;width:51px;height:2px;background:#add8e6"></div>
<div class="vd" style="left:373px;top:220px;height:710px;background-image:linear-gradient(#fff 50%,transparent 50%)"></div>
<div class="vd" style="left:525px;top:220px;height:710px"></div>
<div class="vd" style="left:627px;top:220px;height:710px"></div>
<div class="vd" style="left:729px;top:220px;height:710px"></div>
<div class="vd" style="left:831px;top:220px;height:710px"></div>
<div class="vd" style="left:933px;top:220px;height:710px"></div>
<div class="vd" style="left:1035px;top:220px;height:710px"></div>
<div class="vd" style="left:1137px;top:220px;height:710px"></div>
<div class="vd" style="left:1239px;top:220px;height:710px"></div>
<div class="vd" style="left:1341px;top:220px;height:710px"></div>
<div class="vd" style="left:1443px;top:220px;height:710px"></div>
<div class="vd" style="left:1545px;top:220px;height:710px"></div>
<div class="vd" style="left:1647px;top:220px;height:710px"></div>
<div class="vd" style="left:1749px;top:220px;height:710px"></div>
<div class="vd" style="left:1851px;top:220px;height:710px"></div>
<div class="hd" style="left:322px;top:337px;width:51px"></div>
<div class="hd" style="left:373px;top:337px;width:51px;background-image:linear-gradient(90deg,#fff 50%,transparent 50%)"></div>
<div class="hd" style="left:425px;top:337px;width:1427px"></div>
<div class="hd" style="left:322px;top:455px;width:51px"></div>
<div class="hd" style="left:373px;top:455px;width:51px;background-image:linear-gradient(90deg,#fff 50%,transparent 50%)"></div>
<div class="hd" style="left:425px;top:455px;width:1427px"></div>
<div class="hd" style="left:322px;top:573px;width:51px"></div>
<div class="hd" style="left:373px;top:573px;width:51px;background-image:linear-gradient(90deg,#fff 50%,transparent 50%)"></div>
<div class="hd" style="left:425px;top:573px;width:1427px"></div>
<div class="hd" style="left:322px;top:691px;width:51px"></div>
<div class="hd" style="left:373px;top:691px;width:51px;background-image:linear-gradient(90deg,#fff 50%,transparent 50%)"></div>
<div class="hd" style="left:425px;top:691px;width:1427px"></div>
<div class="hd" style="left:322px;top:809px;width:51px"></div>
<div class="hd" style="left:373px;top:809px;width:51px;background-image:linear-gradient(90deg,#fff 50%,transparent 50%)"></div>
<div class="hd" style="left:425px;top:809px;width:1427px"></div>
<div class="hd" style="left:322px;top:927px;width:51px"></div>
<div class="hd" style="left:373px;top:927px;width:51px;background-image:linear-gradient(90deg,#fff 50%,transparent 50%)"></div>
<div class="hd" style="left:425px;top:927px;width:1427px"></div>
<div style="position:absolute;left:424px;top:220px;width:1px;height:710px;background:#000"></div>
<div style="position:absolute;left:1850px;top:220px;width:1px;height:710px;background:#000"></div>
<div style="position:absolute;left:832px;top:456px;width:101px;height:117px;background:#add8e6;border:2px solid #0a0a9a"></div>
<svg class="ic" style="left:834px;top:563px" width="8" height="8"><rect x="0" y="0" width="8" height="8" fill="#1a9af0"/><path d="M3 8l5-8" stroke="#d8f0ff" stroke-width="1.2"/></svg>
<div style="position:absolute;left:526px;top:246px;width:1px;height:684px;background:#000"></div>
<div style="position:absolute;left:424px;top:246px;width:41px;height:1px;background:#000"></div>
<div style="position:absolute;left:485px;top:246px;width:41px;height:1px;background:#000"></div>
<div style="position:absolute;left:464px;top:236px;width:1px;height:22px;background:#000"></div>
<div style="position:absolute;left:484px;top:236px;width:1px;height:22px;background:#000"></div>
<div style="position:absolute;left:466px;top:236px;width:17px;height:20px;background:#0000ff"></div>
<div style="position:absolute;left:425.0px;top:220px;width:100px;text-align:center;white-space:nowrap;font-size:13px;color:#333;line-height:14px">SM400</div>
<div style="position:absolute;left:405px;top:270px;white-space:nowrap;font-size:14px;color:#000;line-height:16px">(0)</div>
<div style="position:absolute;left:427px;top:272px;white-space:nowrap;font-size:14px;color:#008000;line-height:16px">始终ON</div>
<div style="position:absolute;left:624px;top:361px;width:9px;height:9px;background:#ffff00;border:1px solid #000"></div>
<div style="position:absolute;left:627px;top:364px;width:3px;height:3px;background:#000"></div>
<div style="position:absolute;left:526px;top:246px;width:617px;height:1px;background:#000"></div>
<div style="position:absolute;left:1143px;top:236px;width:707px;height:98px;border:1px solid #000"></div>
<div style="position:absolute;left:1144px;top:237px;width:95px;height:96px;background:linear-gradient(#fbfbfb,#7c7c7c)"></div>
<div style="position:absolute;left:1143px;top:269px;width:96px;text-align:center;font-size:14px;line-height:16px;color:#111">ADPRW</div>
<div class="op" style="left:1240px;top:237px">K1</div>
<div class="op" style="left:1342px;top:237px">H4</div>
<div class="op" style="left:1444px;top:237px">H0</div>
<div class="op" style="left:1546px;top:237px">K2</div>
<div class="op" style="left:1648px;top:237px">D120</div>
<div class="val" style="left:1648px;top:251px">1</div>
<div class="op" style="left:1750px;top:237px">M200</div>
<div style="position:absolute;left:1794px;top:252px;width:13px;height:13px;background:#0000ff"></div>
<div style="position:absolute;left:526px;top:364px;width:1025px;height:1px;background:#000"></div>
<div style="position:absolute;left:1551px;top:354px;width:299px;height:98px;border:1px solid #000"></div>
<div style="position:absolute;left:1552px;top:355px;width:95px;height:96px;background:linear-gradient(#fbfbfb,#7c7c7c)"></div>
<div style="position:absolute;left:1551px;top:387px;width:96px;text-align:center;font-size:14px;line-height:16px;color:#111">MOV</div>
<div class="op" style="left:1648px;top:355px">D120</div>
<div class="val" style="left:1648px;top:369px">1</div>
<div class="op" style="left:1750px;top:355px">D123</div>
<div class="val" style="left:1750px;top:369px">1</div>
<div style="position:absolute;left:526px;top:482px;width:306px;height:1px;background:#000"></div>
<div style="position:absolute;left:834px;top:482px;width:97px;height:1px;background:#000"></div>
<div style="position:absolute;left:933px;top:482px;width:618px;height:1px;background:#000"></div>
<div style="position:absolute;left:1551px;top:472px;width:299px;height:98px;border:1px solid #000"></div>
<div style="position:absolute;left:1552px;top:473px;width:95px;height:96px;background:linear-gradient(#fbfbfb,#7c7c7c)"></div>
<div style="position:absolute;left:1551px;top:505px;width:96px;text-align:center;font-size:14px;line-height:16px;color:#111">MOV</div>
<div class="op" style="left:1648px;top:473px">D120</div>
<div class="val" style="left:1648px;top:487px">1</div>
<div class="op" style="left:1750px;top:473px">D122</div>
<div class="val" style="left:1750px;top:487px">1</div>
<div style="position:absolute;left:526px;top:600px;width:1025px;height:1px;background:#000"></div>
<div style="position:absolute;left:1551px;top:590px;width:299px;height:98px;border:1px solid #000"></div>
<div style="position:absolute;left:1552px;top:591px;width:95px;height:96px;background:linear-gradient(#fbfbfb,#7c7c7c)"></div>
<div style="position:absolute;left:1551px;top:623px;width:96px;text-align:center;font-size:14px;line-height:16px;color:#111">DMOV</div>
<div class="op" style="left:1648px;top:591px">D121</div>
<div class="val" style="left:1648px;top:605px">124630</div>
<div class="op" style="left:1750px;top:591px">D126</div>
<div class="val" style="left:1750px;top:605px">124630</div>
<div style="position:absolute;left:526px;top:718px;width:1025px;height:1px;background:#000"></div>
<div style="position:absolute;left:1551px;top:708px;width:299px;height:98px;border:1px solid #000"></div>
<div style="position:absolute;left:1552px;top:709px;width:95px;height:96px;background:linear-gradient(#fbfbfb,#7c7c7c)"></div>
<div style="position:absolute;left:1551px;top:741px;width:96px;text-align:center;font-size:14px;line-height:16px;color:#111">DINT2FLT</div>
<div class="op" style="left:1648px;top:709px">D126</div>
<div class="val" style="left:1648px;top:723px">124630</div>
<div class="op" style="left:1750px;top:709px">D128</div>
<div class="val" style="left:1750px;top:723px">1.246e+005</div>
<div style="position:absolute;left:526px;top:836px;width:923px;height:1px;background:#000"></div>
<div style="position:absolute;left:1449px;top:826px;width:401px;height:98px;border:1px solid #000"></div>
<div style="position:absolute;left:1450px;top:827px;width:95px;height:96px;background:linear-gradient(#fbfbfb,#7c7c7c)"></div>
<div style="position:absolute;left:1449px;top:859px;width:96px;text-align:center;font-size:14px;line-height:16px;color:#111">DEDIV</div>
<div class="op" style="left:1546px;top:827px">D128</div>
<div class="val" style="left:1546px;top:841px">1.246e+005</div>
<div class="op" style="left:1648px;top:827px">K1000</div>
<div class="op" style="left:1750px;top:827px">D98</div>
<div class="val" style="left:1750px;top:841px">124.630</div>
<div style="position:absolute;left:1752px;top:858px;white-space:nowrap;font-size:15px;color:#008000;line-height:15px">转化后实际数</div>
<div style="position:absolute;left:1752px;top:873px;white-space:nowrap;font-size:15px;color:#008000;line-height:15px">值</div>
</body></html>
